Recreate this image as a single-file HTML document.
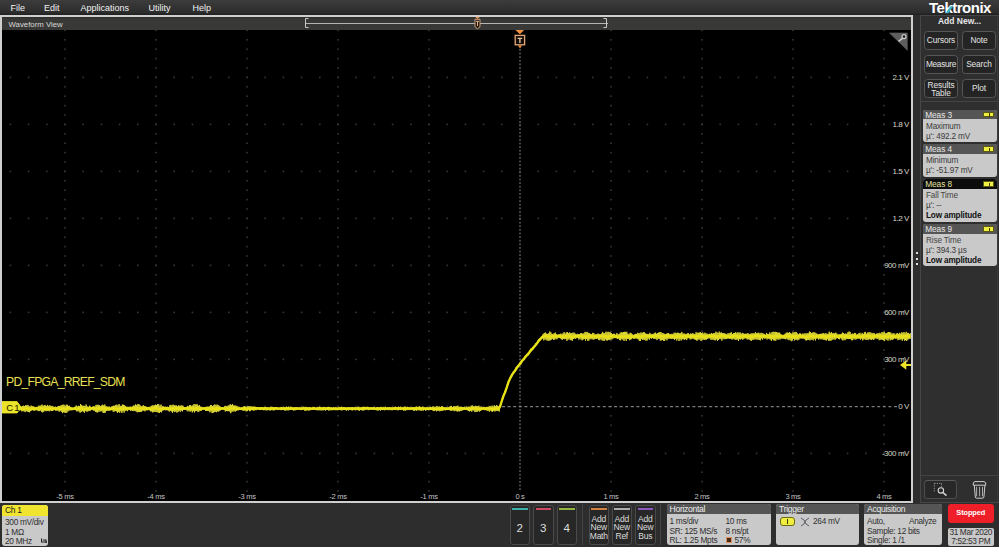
<!DOCTYPE html>
<html><head><meta charset="utf-8">
<style>
*{margin:0;padding:0;box-sizing:border-box}
html,body{width:999px;height:547px;overflow:hidden;background:#2d2d2d;font-family:"Liberation Sans",sans-serif}
.a{position:absolute;white-space:nowrap}
#menu{position:absolute;left:0;top:0;width:999px;height:15px;background:linear-gradient(#3c3c3c,#2c2c2c 85%,#1e1e1e)}
#menu .m{position:absolute;top:3px;font-size:9px;color:#f2f2f2;line-height:11px}
#logo{position:absolute;left:929px;top:-0.5px;font-size:15px;font-weight:bold;color:#fff;letter-spacing:-0.5px;line-height:16px}
#frame{position:absolute;left:0;top:15px;width:913px;height:488px;border:2px solid #cfcfcf;background:#000}
#hdr{position:absolute;left:2px;top:17px;width:909px;height:13px;background:linear-gradient(#2e2e2c,#383836 20%,#393937)}
#hdr .t{position:absolute;left:6.5px;top:2.7px;font-size:7.8px;color:#d8d8d8;line-height:9px}
#plot{position:absolute;left:2px;top:30px;width:909px;height:471px;background:#000;overflow:hidden}
.vl{position:absolute;right:2px;font-size:8px;color:#d4d4c4;line-height:10px;text-align:right;letter-spacing:-0.45px}
.tl{position:absolute;top:462px;width:40px;text-align:center;font-size:7.5px;color:#c4c4c4;line-height:9px;letter-spacing:-0.3px}
#panel{position:absolute;left:920px;top:15px;width:79px;height:488px;border:1px solid #464646;border-right:none;background:#2f2f2f}
.btn{position:absolute;width:34px;height:19px;border:1px solid #565656;border-radius:3.5px;background:#242424;color:#e4e4e4;font-size:8.3px;text-align:center;line-height:17px;letter-spacing:-0.1px}
.card{position:absolute;left:923px;width:74px;border-radius:3px;overflow:hidden;background:#c9c9c9}
.card .h{height:9.5px;background:#555;color:#e8e8e8;font-size:8.3px;line-height:10px;padding-left:2.3px;position:relative;letter-spacing:-0.1px}
.card .h .bd{position:absolute;right:2.8px;top:2.2px;width:11px;height:5.6px;background:#f0ee40;border:0.6px solid #5a5a10}.card .h .bd:after{content:"";position:absolute;left:4.3px;top:0.5px;width:1.2px;height:3.8px;background:#3a3a00}
.card .b{color:#3a3a3a;font-size:8.2px;line-height:10px;padding-left:3px;padding-top:2.5px;letter-spacing:-0.15px}
.bc{position:absolute;border-radius:3px;overflow:hidden;background:#c9c9c9;top:504px;height:41px}
.bc .h{height:10px;background:#555;color:#ececec;font-size:8.6px;line-height:10.5px;padding-left:3px;font-weight:normal;letter-spacing:-0.3px}
.bc .r{position:absolute;font-size:8.3px;color:#303030;line-height:10px;letter-spacing:-0.3px}
.chb{position:absolute;top:504.5px;width:20.5px;height:40px;border:1px solid #4a4a4a;border-radius:3px;background:#272727;color:#dcdcdc;text-align:center}
.chb .bar{position:absolute;left:1.5px;right:1.5px;top:2px;height:2.5px}
</style></head><body>

<div id="menu">
  <div class="m" style="left:10.5px">File</div>
  <div class="m" style="left:44px">Edit</div>
  <div class="m" style="left:80.5px">Applications</div>
  <div class="m" style="left:148.5px">Utility</div>
  <div class="m" style="left:192.5px">Help</div>
</div>
<div id="logo">Tektronix</div>
<svg class="a" style="left:940px;top:0" width="20" height="16"><path d="M5.6 13.3 L8.4 13.3 L13.2 6.2 L10.4 6.2 Z" fill="#3cb4c4"/></svg>

<div id="frame"></div>
<div id="hdr"><div class="t">Waveform View</div>
  <svg class="a" style="left:0;top:0" width="909" height="13">
    <line x1="303" y1="6.5" x2="606" y2="6.5" stroke="#b4b4b4" stroke-width="1"/>
    <path d="M306.5 1.5 H303.5 V10.5 H306.5" fill="none" stroke="#c8c8c8" stroke-width="1"/>
    <path d="M601.5 1.5 H604.5 V10.5 H601.5" fill="none" stroke="#c8c8c8" stroke-width="1"/>
    <path d="M472.5 -0.5 L478.5 -0.5 L475.5 2 Z" fill="#e8904a"/>
    <path d="M473 2.3 H478 V9.8 L475.5 11.8 L473 9.8 Z" fill="#2a1a10" stroke="#c8a080" stroke-width="1"/>
    <path d="M474 4.3 H477 M475.5 4.3 V9" stroke="#d8b090" stroke-width="1" fill="none"/>
  </svg>
</div>

<div id="plot">
  <svg class="a" style="left:-2px;top:-30px" width="913" height="501">
    <g fill="#363636"><rect x="64.2" y="29.6" width="1.6" height="1.6"/><rect x="64.2" y="39.0" width="1.6" height="1.6"/><rect x="64.2" y="48.4" width="1.6" height="1.6"/><rect x="64.2" y="57.8" width="1.6" height="1.6"/><rect x="64.2" y="67.2" width="1.6" height="1.6"/><rect x="64.2" y="76.6" width="1.6" height="1.6"/><rect x="64.2" y="86.0" width="1.6" height="1.6"/><rect x="64.2" y="95.4" width="1.6" height="1.6"/><rect x="64.2" y="104.8" width="1.6" height="1.6"/><rect x="64.2" y="114.2" width="1.6" height="1.6"/><rect x="64.2" y="123.6" width="1.6" height="1.6"/><rect x="64.2" y="133.0" width="1.6" height="1.6"/><rect x="64.2" y="142.4" width="1.6" height="1.6"/><rect x="64.2" y="151.8" width="1.6" height="1.6"/><rect x="64.2" y="161.2" width="1.6" height="1.6"/><rect x="64.2" y="170.6" width="1.6" height="1.6"/><rect x="64.2" y="180.0" width="1.6" height="1.6"/><rect x="64.2" y="189.4" width="1.6" height="1.6"/><rect x="64.2" y="198.8" width="1.6" height="1.6"/><rect x="64.2" y="208.2" width="1.6" height="1.6"/><rect x="64.2" y="217.6" width="1.6" height="1.6"/><rect x="64.2" y="227.0" width="1.6" height="1.6"/><rect x="64.2" y="236.4" width="1.6" height="1.6"/><rect x="64.2" y="245.8" width="1.6" height="1.6"/><rect x="64.2" y="255.2" width="1.6" height="1.6"/><rect x="64.2" y="264.6" width="1.6" height="1.6"/><rect x="64.2" y="274.0" width="1.6" height="1.6"/><rect x="64.2" y="283.4" width="1.6" height="1.6"/><rect x="64.2" y="292.8" width="1.6" height="1.6"/><rect x="64.2" y="302.2" width="1.6" height="1.6"/><rect x="64.2" y="311.6" width="1.6" height="1.6"/><rect x="64.2" y="321.0" width="1.6" height="1.6"/><rect x="64.2" y="330.4" width="1.6" height="1.6"/><rect x="64.2" y="339.8" width="1.6" height="1.6"/><rect x="64.2" y="349.2" width="1.6" height="1.6"/><rect x="64.2" y="358.6" width="1.6" height="1.6"/><rect x="64.2" y="368.0" width="1.6" height="1.6"/><rect x="64.2" y="377.4" width="1.6" height="1.6"/><rect x="64.2" y="386.8" width="1.6" height="1.6"/><rect x="64.2" y="396.2" width="1.6" height="1.6"/><rect x="64.2" y="405.6" width="1.6" height="1.6"/><rect x="64.2" y="415.0" width="1.6" height="1.6"/><rect x="64.2" y="424.4" width="1.6" height="1.6"/><rect x="64.2" y="433.8" width="1.6" height="1.6"/><rect x="64.2" y="443.2" width="1.6" height="1.6"/><rect x="64.2" y="452.6" width="1.6" height="1.6"/><rect x="64.2" y="462.0" width="1.6" height="1.6"/><rect x="64.2" y="471.4" width="1.6" height="1.6"/><rect x="64.2" y="480.8" width="1.6" height="1.6"/><rect x="64.2" y="490.2" width="1.6" height="1.6"/><rect x="155.2" y="29.6" width="1.6" height="1.6"/><rect x="155.2" y="39.0" width="1.6" height="1.6"/><rect x="155.2" y="48.4" width="1.6" height="1.6"/><rect x="155.2" y="57.8" width="1.6" height="1.6"/><rect x="155.2" y="67.2" width="1.6" height="1.6"/><rect x="155.2" y="76.6" width="1.6" height="1.6"/><rect x="155.2" y="86.0" width="1.6" height="1.6"/><rect x="155.2" y="95.4" width="1.6" height="1.6"/><rect x="155.2" y="104.8" width="1.6" height="1.6"/><rect x="155.2" y="114.2" width="1.6" height="1.6"/><rect x="155.2" y="123.6" width="1.6" height="1.6"/><rect x="155.2" y="133.0" width="1.6" height="1.6"/><rect x="155.2" y="142.4" width="1.6" height="1.6"/><rect x="155.2" y="151.8" width="1.6" height="1.6"/><rect x="155.2" y="161.2" width="1.6" height="1.6"/><rect x="155.2" y="170.6" width="1.6" height="1.6"/><rect x="155.2" y="180.0" width="1.6" height="1.6"/><rect x="155.2" y="189.4" width="1.6" height="1.6"/><rect x="155.2" y="198.8" width="1.6" height="1.6"/><rect x="155.2" y="208.2" width="1.6" height="1.6"/><rect x="155.2" y="217.6" width="1.6" height="1.6"/><rect x="155.2" y="227.0" width="1.6" height="1.6"/><rect x="155.2" y="236.4" width="1.6" height="1.6"/><rect x="155.2" y="245.8" width="1.6" height="1.6"/><rect x="155.2" y="255.2" width="1.6" height="1.6"/><rect x="155.2" y="264.6" width="1.6" height="1.6"/><rect x="155.2" y="274.0" width="1.6" height="1.6"/><rect x="155.2" y="283.4" width="1.6" height="1.6"/><rect x="155.2" y="292.8" width="1.6" height="1.6"/><rect x="155.2" y="302.2" width="1.6" height="1.6"/><rect x="155.2" y="311.6" width="1.6" height="1.6"/><rect x="155.2" y="321.0" width="1.6" height="1.6"/><rect x="155.2" y="330.4" width="1.6" height="1.6"/><rect x="155.2" y="339.8" width="1.6" height="1.6"/><rect x="155.2" y="349.2" width="1.6" height="1.6"/><rect x="155.2" y="358.6" width="1.6" height="1.6"/><rect x="155.2" y="368.0" width="1.6" height="1.6"/><rect x="155.2" y="377.4" width="1.6" height="1.6"/><rect x="155.2" y="386.8" width="1.6" height="1.6"/><rect x="155.2" y="396.2" width="1.6" height="1.6"/><rect x="155.2" y="405.6" width="1.6" height="1.6"/><rect x="155.2" y="415.0" width="1.6" height="1.6"/><rect x="155.2" y="424.4" width="1.6" height="1.6"/><rect x="155.2" y="433.8" width="1.6" height="1.6"/><rect x="155.2" y="443.2" width="1.6" height="1.6"/><rect x="155.2" y="452.6" width="1.6" height="1.6"/><rect x="155.2" y="462.0" width="1.6" height="1.6"/><rect x="155.2" y="471.4" width="1.6" height="1.6"/><rect x="155.2" y="480.8" width="1.6" height="1.6"/><rect x="155.2" y="490.2" width="1.6" height="1.6"/><rect x="246.2" y="29.6" width="1.6" height="1.6"/><rect x="246.2" y="39.0" width="1.6" height="1.6"/><rect x="246.2" y="48.4" width="1.6" height="1.6"/><rect x="246.2" y="57.8" width="1.6" height="1.6"/><rect x="246.2" y="67.2" width="1.6" height="1.6"/><rect x="246.2" y="76.6" width="1.6" height="1.6"/><rect x="246.2" y="86.0" width="1.6" height="1.6"/><rect x="246.2" y="95.4" width="1.6" height="1.6"/><rect x="246.2" y="104.8" width="1.6" height="1.6"/><rect x="246.2" y="114.2" width="1.6" height="1.6"/><rect x="246.2" y="123.6" width="1.6" height="1.6"/><rect x="246.2" y="133.0" width="1.6" height="1.6"/><rect x="246.2" y="142.4" width="1.6" height="1.6"/><rect x="246.2" y="151.8" width="1.6" height="1.6"/><rect x="246.2" y="161.2" width="1.6" height="1.6"/><rect x="246.2" y="170.6" width="1.6" height="1.6"/><rect x="246.2" y="180.0" width="1.6" height="1.6"/><rect x="246.2" y="189.4" width="1.6" height="1.6"/><rect x="246.2" y="198.8" width="1.6" height="1.6"/><rect x="246.2" y="208.2" width="1.6" height="1.6"/><rect x="246.2" y="217.6" width="1.6" height="1.6"/><rect x="246.2" y="227.0" width="1.6" height="1.6"/><rect x="246.2" y="236.4" width="1.6" height="1.6"/><rect x="246.2" y="245.8" width="1.6" height="1.6"/><rect x="246.2" y="255.2" width="1.6" height="1.6"/><rect x="246.2" y="264.6" width="1.6" height="1.6"/><rect x="246.2" y="274.0" width="1.6" height="1.6"/><rect x="246.2" y="283.4" width="1.6" height="1.6"/><rect x="246.2" y="292.8" width="1.6" height="1.6"/><rect x="246.2" y="302.2" width="1.6" height="1.6"/><rect x="246.2" y="311.6" width="1.6" height="1.6"/><rect x="246.2" y="321.0" width="1.6" height="1.6"/><rect x="246.2" y="330.4" width="1.6" height="1.6"/><rect x="246.2" y="339.8" width="1.6" height="1.6"/><rect x="246.2" y="349.2" width="1.6" height="1.6"/><rect x="246.2" y="358.6" width="1.6" height="1.6"/><rect x="246.2" y="368.0" width="1.6" height="1.6"/><rect x="246.2" y="377.4" width="1.6" height="1.6"/><rect x="246.2" y="386.8" width="1.6" height="1.6"/><rect x="246.2" y="396.2" width="1.6" height="1.6"/><rect x="246.2" y="405.6" width="1.6" height="1.6"/><rect x="246.2" y="415.0" width="1.6" height="1.6"/><rect x="246.2" y="424.4" width="1.6" height="1.6"/><rect x="246.2" y="433.8" width="1.6" height="1.6"/><rect x="246.2" y="443.2" width="1.6" height="1.6"/><rect x="246.2" y="452.6" width="1.6" height="1.6"/><rect x="246.2" y="462.0" width="1.6" height="1.6"/><rect x="246.2" y="471.4" width="1.6" height="1.6"/><rect x="246.2" y="480.8" width="1.6" height="1.6"/><rect x="246.2" y="490.2" width="1.6" height="1.6"/><rect x="337.2" y="29.6" width="1.6" height="1.6"/><rect x="337.2" y="39.0" width="1.6" height="1.6"/><rect x="337.2" y="48.4" width="1.6" height="1.6"/><rect x="337.2" y="57.8" width="1.6" height="1.6"/><rect x="337.2" y="67.2" width="1.6" height="1.6"/><rect x="337.2" y="76.6" width="1.6" height="1.6"/><rect x="337.2" y="86.0" width="1.6" height="1.6"/><rect x="337.2" y="95.4" width="1.6" height="1.6"/><rect x="337.2" y="104.8" width="1.6" height="1.6"/><rect x="337.2" y="114.2" width="1.6" height="1.6"/><rect x="337.2" y="123.6" width="1.6" height="1.6"/><rect x="337.2" y="133.0" width="1.6" height="1.6"/><rect x="337.2" y="142.4" width="1.6" height="1.6"/><rect x="337.2" y="151.8" width="1.6" height="1.6"/><rect x="337.2" y="161.2" width="1.6" height="1.6"/><rect x="337.2" y="170.6" width="1.6" height="1.6"/><rect x="337.2" y="180.0" width="1.6" height="1.6"/><rect x="337.2" y="189.4" width="1.6" height="1.6"/><rect x="337.2" y="198.8" width="1.6" height="1.6"/><rect x="337.2" y="208.2" width="1.6" height="1.6"/><rect x="337.2" y="217.6" width="1.6" height="1.6"/><rect x="337.2" y="227.0" width="1.6" height="1.6"/><rect x="337.2" y="236.4" width="1.6" height="1.6"/><rect x="337.2" y="245.8" width="1.6" height="1.6"/><rect x="337.2" y="255.2" width="1.6" height="1.6"/><rect x="337.2" y="264.6" width="1.6" height="1.6"/><rect x="337.2" y="274.0" width="1.6" height="1.6"/><rect x="337.2" y="283.4" width="1.6" height="1.6"/><rect x="337.2" y="292.8" width="1.6" height="1.6"/><rect x="337.2" y="302.2" width="1.6" height="1.6"/><rect x="337.2" y="311.6" width="1.6" height="1.6"/><rect x="337.2" y="321.0" width="1.6" height="1.6"/><rect x="337.2" y="330.4" width="1.6" height="1.6"/><rect x="337.2" y="339.8" width="1.6" height="1.6"/><rect x="337.2" y="349.2" width="1.6" height="1.6"/><rect x="337.2" y="358.6" width="1.6" height="1.6"/><rect x="337.2" y="368.0" width="1.6" height="1.6"/><rect x="337.2" y="377.4" width="1.6" height="1.6"/><rect x="337.2" y="386.8" width="1.6" height="1.6"/><rect x="337.2" y="396.2" width="1.6" height="1.6"/><rect x="337.2" y="405.6" width="1.6" height="1.6"/><rect x="337.2" y="415.0" width="1.6" height="1.6"/><rect x="337.2" y="424.4" width="1.6" height="1.6"/><rect x="337.2" y="433.8" width="1.6" height="1.6"/><rect x="337.2" y="443.2" width="1.6" height="1.6"/><rect x="337.2" y="452.6" width="1.6" height="1.6"/><rect x="337.2" y="462.0" width="1.6" height="1.6"/><rect x="337.2" y="471.4" width="1.6" height="1.6"/><rect x="337.2" y="480.8" width="1.6" height="1.6"/><rect x="337.2" y="490.2" width="1.6" height="1.6"/><rect x="428.2" y="29.6" width="1.6" height="1.6"/><rect x="428.2" y="39.0" width="1.6" height="1.6"/><rect x="428.2" y="48.4" width="1.6" height="1.6"/><rect x="428.2" y="57.8" width="1.6" height="1.6"/><rect x="428.2" y="67.2" width="1.6" height="1.6"/><rect x="428.2" y="76.6" width="1.6" height="1.6"/><rect x="428.2" y="86.0" width="1.6" height="1.6"/><rect x="428.2" y="95.4" width="1.6" height="1.6"/><rect x="428.2" y="104.8" width="1.6" height="1.6"/><rect x="428.2" y="114.2" width="1.6" height="1.6"/><rect x="428.2" y="123.6" width="1.6" height="1.6"/><rect x="428.2" y="133.0" width="1.6" height="1.6"/><rect x="428.2" y="142.4" width="1.6" height="1.6"/><rect x="428.2" y="151.8" width="1.6" height="1.6"/><rect x="428.2" y="161.2" width="1.6" height="1.6"/><rect x="428.2" y="170.6" width="1.6" height="1.6"/><rect x="428.2" y="180.0" width="1.6" height="1.6"/><rect x="428.2" y="189.4" width="1.6" height="1.6"/><rect x="428.2" y="198.8" width="1.6" height="1.6"/><rect x="428.2" y="208.2" width="1.6" height="1.6"/><rect x="428.2" y="217.6" width="1.6" height="1.6"/><rect x="428.2" y="227.0" width="1.6" height="1.6"/><rect x="428.2" y="236.4" width="1.6" height="1.6"/><rect x="428.2" y="245.8" width="1.6" height="1.6"/><rect x="428.2" y="255.2" width="1.6" height="1.6"/><rect x="428.2" y="264.6" width="1.6" height="1.6"/><rect x="428.2" y="274.0" width="1.6" height="1.6"/><rect x="428.2" y="283.4" width="1.6" height="1.6"/><rect x="428.2" y="292.8" width="1.6" height="1.6"/><rect x="428.2" y="302.2" width="1.6" height="1.6"/><rect x="428.2" y="311.6" width="1.6" height="1.6"/><rect x="428.2" y="321.0" width="1.6" height="1.6"/><rect x="428.2" y="330.4" width="1.6" height="1.6"/><rect x="428.2" y="339.8" width="1.6" height="1.6"/><rect x="428.2" y="349.2" width="1.6" height="1.6"/><rect x="428.2" y="358.6" width="1.6" height="1.6"/><rect x="428.2" y="368.0" width="1.6" height="1.6"/><rect x="428.2" y="377.4" width="1.6" height="1.6"/><rect x="428.2" y="386.8" width="1.6" height="1.6"/><rect x="428.2" y="396.2" width="1.6" height="1.6"/><rect x="428.2" y="405.6" width="1.6" height="1.6"/><rect x="428.2" y="415.0" width="1.6" height="1.6"/><rect x="428.2" y="424.4" width="1.6" height="1.6"/><rect x="428.2" y="433.8" width="1.6" height="1.6"/><rect x="428.2" y="443.2" width="1.6" height="1.6"/><rect x="428.2" y="452.6" width="1.6" height="1.6"/><rect x="428.2" y="462.0" width="1.6" height="1.6"/><rect x="428.2" y="471.4" width="1.6" height="1.6"/><rect x="428.2" y="480.8" width="1.6" height="1.6"/><rect x="428.2" y="490.2" width="1.6" height="1.6"/><rect x="610.2" y="29.6" width="1.6" height="1.6"/><rect x="610.2" y="39.0" width="1.6" height="1.6"/><rect x="610.2" y="48.4" width="1.6" height="1.6"/><rect x="610.2" y="57.8" width="1.6" height="1.6"/><rect x="610.2" y="67.2" width="1.6" height="1.6"/><rect x="610.2" y="76.6" width="1.6" height="1.6"/><rect x="610.2" y="86.0" width="1.6" height="1.6"/><rect x="610.2" y="95.4" width="1.6" height="1.6"/><rect x="610.2" y="104.8" width="1.6" height="1.6"/><rect x="610.2" y="114.2" width="1.6" height="1.6"/><rect x="610.2" y="123.6" width="1.6" height="1.6"/><rect x="610.2" y="133.0" width="1.6" height="1.6"/><rect x="610.2" y="142.4" width="1.6" height="1.6"/><rect x="610.2" y="151.8" width="1.6" height="1.6"/><rect x="610.2" y="161.2" width="1.6" height="1.6"/><rect x="610.2" y="170.6" width="1.6" height="1.6"/><rect x="610.2" y="180.0" width="1.6" height="1.6"/><rect x="610.2" y="189.4" width="1.6" height="1.6"/><rect x="610.2" y="198.8" width="1.6" height="1.6"/><rect x="610.2" y="208.2" width="1.6" height="1.6"/><rect x="610.2" y="217.6" width="1.6" height="1.6"/><rect x="610.2" y="227.0" width="1.6" height="1.6"/><rect x="610.2" y="236.4" width="1.6" height="1.6"/><rect x="610.2" y="245.8" width="1.6" height="1.6"/><rect x="610.2" y="255.2" width="1.6" height="1.6"/><rect x="610.2" y="264.6" width="1.6" height="1.6"/><rect x="610.2" y="274.0" width="1.6" height="1.6"/><rect x="610.2" y="283.4" width="1.6" height="1.6"/><rect x="610.2" y="292.8" width="1.6" height="1.6"/><rect x="610.2" y="302.2" width="1.6" height="1.6"/><rect x="610.2" y="311.6" width="1.6" height="1.6"/><rect x="610.2" y="321.0" width="1.6" height="1.6"/><rect x="610.2" y="330.4" width="1.6" height="1.6"/><rect x="610.2" y="339.8" width="1.6" height="1.6"/><rect x="610.2" y="349.2" width="1.6" height="1.6"/><rect x="610.2" y="358.6" width="1.6" height="1.6"/><rect x="610.2" y="368.0" width="1.6" height="1.6"/><rect x="610.2" y="377.4" width="1.6" height="1.6"/><rect x="610.2" y="386.8" width="1.6" height="1.6"/><rect x="610.2" y="396.2" width="1.6" height="1.6"/><rect x="610.2" y="405.6" width="1.6" height="1.6"/><rect x="610.2" y="415.0" width="1.6" height="1.6"/><rect x="610.2" y="424.4" width="1.6" height="1.6"/><rect x="610.2" y="433.8" width="1.6" height="1.6"/><rect x="610.2" y="443.2" width="1.6" height="1.6"/><rect x="610.2" y="452.6" width="1.6" height="1.6"/><rect x="610.2" y="462.0" width="1.6" height="1.6"/><rect x="610.2" y="471.4" width="1.6" height="1.6"/><rect x="610.2" y="480.8" width="1.6" height="1.6"/><rect x="610.2" y="490.2" width="1.6" height="1.6"/><rect x="701.2" y="29.6" width="1.6" height="1.6"/><rect x="701.2" y="39.0" width="1.6" height="1.6"/><rect x="701.2" y="48.4" width="1.6" height="1.6"/><rect x="701.2" y="57.8" width="1.6" height="1.6"/><rect x="701.2" y="67.2" width="1.6" height="1.6"/><rect x="701.2" y="76.6" width="1.6" height="1.6"/><rect x="701.2" y="86.0" width="1.6" height="1.6"/><rect x="701.2" y="95.4" width="1.6" height="1.6"/><rect x="701.2" y="104.8" width="1.6" height="1.6"/><rect x="701.2" y="114.2" width="1.6" height="1.6"/><rect x="701.2" y="123.6" width="1.6" height="1.6"/><rect x="701.2" y="133.0" width="1.6" height="1.6"/><rect x="701.2" y="142.4" width="1.6" height="1.6"/><rect x="701.2" y="151.8" width="1.6" height="1.6"/><rect x="701.2" y="161.2" width="1.6" height="1.6"/><rect x="701.2" y="170.6" width="1.6" height="1.6"/><rect x="701.2" y="180.0" width="1.6" height="1.6"/><rect x="701.2" y="189.4" width="1.6" height="1.6"/><rect x="701.2" y="198.8" width="1.6" height="1.6"/><rect x="701.2" y="208.2" width="1.6" height="1.6"/><rect x="701.2" y="217.6" width="1.6" height="1.6"/><rect x="701.2" y="227.0" width="1.6" height="1.6"/><rect x="701.2" y="236.4" width="1.6" height="1.6"/><rect x="701.2" y="245.8" width="1.6" height="1.6"/><rect x="701.2" y="255.2" width="1.6" height="1.6"/><rect x="701.2" y="264.6" width="1.6" height="1.6"/><rect x="701.2" y="274.0" width="1.6" height="1.6"/><rect x="701.2" y="283.4" width="1.6" height="1.6"/><rect x="701.2" y="292.8" width="1.6" height="1.6"/><rect x="701.2" y="302.2" width="1.6" height="1.6"/><rect x="701.2" y="311.6" width="1.6" height="1.6"/><rect x="701.2" y="321.0" width="1.6" height="1.6"/><rect x="701.2" y="330.4" width="1.6" height="1.6"/><rect x="701.2" y="339.8" width="1.6" height="1.6"/><rect x="701.2" y="349.2" width="1.6" height="1.6"/><rect x="701.2" y="358.6" width="1.6" height="1.6"/><rect x="701.2" y="368.0" width="1.6" height="1.6"/><rect x="701.2" y="377.4" width="1.6" height="1.6"/><rect x="701.2" y="386.8" width="1.6" height="1.6"/><rect x="701.2" y="396.2" width="1.6" height="1.6"/><rect x="701.2" y="405.6" width="1.6" height="1.6"/><rect x="701.2" y="415.0" width="1.6" height="1.6"/><rect x="701.2" y="424.4" width="1.6" height="1.6"/><rect x="701.2" y="433.8" width="1.6" height="1.6"/><rect x="701.2" y="443.2" width="1.6" height="1.6"/><rect x="701.2" y="452.6" width="1.6" height="1.6"/><rect x="701.2" y="462.0" width="1.6" height="1.6"/><rect x="701.2" y="471.4" width="1.6" height="1.6"/><rect x="701.2" y="480.8" width="1.6" height="1.6"/><rect x="701.2" y="490.2" width="1.6" height="1.6"/><rect x="792.2" y="29.6" width="1.6" height="1.6"/><rect x="792.2" y="39.0" width="1.6" height="1.6"/><rect x="792.2" y="48.4" width="1.6" height="1.6"/><rect x="792.2" y="57.8" width="1.6" height="1.6"/><rect x="792.2" y="67.2" width="1.6" height="1.6"/><rect x="792.2" y="76.6" width="1.6" height="1.6"/><rect x="792.2" y="86.0" width="1.6" height="1.6"/><rect x="792.2" y="95.4" width="1.6" height="1.6"/><rect x="792.2" y="104.8" width="1.6" height="1.6"/><rect x="792.2" y="114.2" width="1.6" height="1.6"/><rect x="792.2" y="123.6" width="1.6" height="1.6"/><rect x="792.2" y="133.0" width="1.6" height="1.6"/><rect x="792.2" y="142.4" width="1.6" height="1.6"/><rect x="792.2" y="151.8" width="1.6" height="1.6"/><rect x="792.2" y="161.2" width="1.6" height="1.6"/><rect x="792.2" y="170.6" width="1.6" height="1.6"/><rect x="792.2" y="180.0" width="1.6" height="1.6"/><rect x="792.2" y="189.4" width="1.6" height="1.6"/><rect x="792.2" y="198.8" width="1.6" height="1.6"/><rect x="792.2" y="208.2" width="1.6" height="1.6"/><rect x="792.2" y="217.6" width="1.6" height="1.6"/><rect x="792.2" y="227.0" width="1.6" height="1.6"/><rect x="792.2" y="236.4" width="1.6" height="1.6"/><rect x="792.2" y="245.8" width="1.6" height="1.6"/><rect x="792.2" y="255.2" width="1.6" height="1.6"/><rect x="792.2" y="264.6" width="1.6" height="1.6"/><rect x="792.2" y="274.0" width="1.6" height="1.6"/><rect x="792.2" y="283.4" width="1.6" height="1.6"/><rect x="792.2" y="292.8" width="1.6" height="1.6"/><rect x="792.2" y="302.2" width="1.6" height="1.6"/><rect x="792.2" y="311.6" width="1.6" height="1.6"/><rect x="792.2" y="321.0" width="1.6" height="1.6"/><rect x="792.2" y="330.4" width="1.6" height="1.6"/><rect x="792.2" y="339.8" width="1.6" height="1.6"/><rect x="792.2" y="349.2" width="1.6" height="1.6"/><rect x="792.2" y="358.6" width="1.6" height="1.6"/><rect x="792.2" y="368.0" width="1.6" height="1.6"/><rect x="792.2" y="377.4" width="1.6" height="1.6"/><rect x="792.2" y="386.8" width="1.6" height="1.6"/><rect x="792.2" y="396.2" width="1.6" height="1.6"/><rect x="792.2" y="405.6" width="1.6" height="1.6"/><rect x="792.2" y="415.0" width="1.6" height="1.6"/><rect x="792.2" y="424.4" width="1.6" height="1.6"/><rect x="792.2" y="433.8" width="1.6" height="1.6"/><rect x="792.2" y="443.2" width="1.6" height="1.6"/><rect x="792.2" y="452.6" width="1.6" height="1.6"/><rect x="792.2" y="462.0" width="1.6" height="1.6"/><rect x="792.2" y="471.4" width="1.6" height="1.6"/><rect x="792.2" y="480.8" width="1.6" height="1.6"/><rect x="792.2" y="490.2" width="1.6" height="1.6"/><rect x="883.2" y="29.6" width="1.6" height="1.6"/><rect x="883.2" y="39.0" width="1.6" height="1.6"/><rect x="883.2" y="48.4" width="1.6" height="1.6"/><rect x="883.2" y="57.8" width="1.6" height="1.6"/><rect x="883.2" y="67.2" width="1.6" height="1.6"/><rect x="883.2" y="76.6" width="1.6" height="1.6"/><rect x="883.2" y="86.0" width="1.6" height="1.6"/><rect x="883.2" y="95.4" width="1.6" height="1.6"/><rect x="883.2" y="104.8" width="1.6" height="1.6"/><rect x="883.2" y="114.2" width="1.6" height="1.6"/><rect x="883.2" y="123.6" width="1.6" height="1.6"/><rect x="883.2" y="133.0" width="1.6" height="1.6"/><rect x="883.2" y="142.4" width="1.6" height="1.6"/><rect x="883.2" y="151.8" width="1.6" height="1.6"/><rect x="883.2" y="161.2" width="1.6" height="1.6"/><rect x="883.2" y="170.6" width="1.6" height="1.6"/><rect x="883.2" y="180.0" width="1.6" height="1.6"/><rect x="883.2" y="189.4" width="1.6" height="1.6"/><rect x="883.2" y="198.8" width="1.6" height="1.6"/><rect x="883.2" y="208.2" width="1.6" height="1.6"/><rect x="883.2" y="217.6" width="1.6" height="1.6"/><rect x="883.2" y="227.0" width="1.6" height="1.6"/><rect x="883.2" y="236.4" width="1.6" height="1.6"/><rect x="883.2" y="245.8" width="1.6" height="1.6"/><rect x="883.2" y="255.2" width="1.6" height="1.6"/><rect x="883.2" y="264.6" width="1.6" height="1.6"/><rect x="883.2" y="274.0" width="1.6" height="1.6"/><rect x="883.2" y="283.4" width="1.6" height="1.6"/><rect x="883.2" y="292.8" width="1.6" height="1.6"/><rect x="883.2" y="302.2" width="1.6" height="1.6"/><rect x="883.2" y="311.6" width="1.6" height="1.6"/><rect x="883.2" y="321.0" width="1.6" height="1.6"/><rect x="883.2" y="330.4" width="1.6" height="1.6"/><rect x="883.2" y="339.8" width="1.6" height="1.6"/><rect x="883.2" y="349.2" width="1.6" height="1.6"/><rect x="883.2" y="358.6" width="1.6" height="1.6"/><rect x="883.2" y="368.0" width="1.6" height="1.6"/><rect x="883.2" y="377.4" width="1.6" height="1.6"/><rect x="883.2" y="386.8" width="1.6" height="1.6"/><rect x="883.2" y="396.2" width="1.6" height="1.6"/><rect x="883.2" y="405.6" width="1.6" height="1.6"/><rect x="883.2" y="415.0" width="1.6" height="1.6"/><rect x="883.2" y="424.4" width="1.6" height="1.6"/><rect x="883.2" y="433.8" width="1.6" height="1.6"/><rect x="883.2" y="443.2" width="1.6" height="1.6"/><rect x="883.2" y="452.6" width="1.6" height="1.6"/><rect x="883.2" y="462.0" width="1.6" height="1.6"/><rect x="883.2" y="471.4" width="1.6" height="1.6"/><rect x="883.2" y="480.8" width="1.6" height="1.6"/><rect x="883.2" y="490.2" width="1.6" height="1.6"/><rect x="9.6" y="76.6" width="1.6" height="1.6"/><rect x="27.8" y="76.6" width="1.6" height="1.6"/><rect x="46.0" y="76.6" width="1.6" height="1.6"/><rect x="64.2" y="76.6" width="1.6" height="1.6"/><rect x="82.4" y="76.6" width="1.6" height="1.6"/><rect x="100.6" y="76.6" width="1.6" height="1.6"/><rect x="118.8" y="76.6" width="1.6" height="1.6"/><rect x="137.0" y="76.6" width="1.6" height="1.6"/><rect x="155.2" y="76.6" width="1.6" height="1.6"/><rect x="173.4" y="76.6" width="1.6" height="1.6"/><rect x="191.6" y="76.6" width="1.6" height="1.6"/><rect x="209.8" y="76.6" width="1.6" height="1.6"/><rect x="228.0" y="76.6" width="1.6" height="1.6"/><rect x="246.2" y="76.6" width="1.6" height="1.6"/><rect x="264.4" y="76.6" width="1.6" height="1.6"/><rect x="282.6" y="76.6" width="1.6" height="1.6"/><rect x="300.8" y="76.6" width="1.6" height="1.6"/><rect x="319.0" y="76.6" width="1.6" height="1.6"/><rect x="337.2" y="76.6" width="1.6" height="1.6"/><rect x="355.4" y="76.6" width="1.6" height="1.6"/><rect x="373.6" y="76.6" width="1.6" height="1.6"/><rect x="391.8" y="76.6" width="1.6" height="1.6"/><rect x="410.0" y="76.6" width="1.6" height="1.6"/><rect x="428.2" y="76.6" width="1.6" height="1.6"/><rect x="446.4" y="76.6" width="1.6" height="1.6"/><rect x="464.6" y="76.6" width="1.6" height="1.6"/><rect x="482.8" y="76.6" width="1.6" height="1.6"/><rect x="501.0" y="76.6" width="1.6" height="1.6"/><rect x="519.2" y="76.6" width="1.6" height="1.6"/><rect x="537.4" y="76.6" width="1.6" height="1.6"/><rect x="555.6" y="76.6" width="1.6" height="1.6"/><rect x="573.8" y="76.6" width="1.6" height="1.6"/><rect x="592.0" y="76.6" width="1.6" height="1.6"/><rect x="610.2" y="76.6" width="1.6" height="1.6"/><rect x="628.4" y="76.6" width="1.6" height="1.6"/><rect x="646.6" y="76.6" width="1.6" height="1.6"/><rect x="664.8" y="76.6" width="1.6" height="1.6"/><rect x="683.0" y="76.6" width="1.6" height="1.6"/><rect x="701.2" y="76.6" width="1.6" height="1.6"/><rect x="719.4" y="76.6" width="1.6" height="1.6"/><rect x="737.6" y="76.6" width="1.6" height="1.6"/><rect x="755.8" y="76.6" width="1.6" height="1.6"/><rect x="774.0" y="76.6" width="1.6" height="1.6"/><rect x="792.2" y="76.6" width="1.6" height="1.6"/><rect x="810.4" y="76.6" width="1.6" height="1.6"/><rect x="828.6" y="76.6" width="1.6" height="1.6"/><rect x="846.8" y="76.6" width="1.6" height="1.6"/><rect x="865.0" y="76.6" width="1.6" height="1.6"/><rect x="883.2" y="76.6" width="1.6" height="1.6"/><rect x="901.4" y="76.6" width="1.6" height="1.6"/><rect x="9.6" y="123.6" width="1.6" height="1.6"/><rect x="27.8" y="123.6" width="1.6" height="1.6"/><rect x="46.0" y="123.6" width="1.6" height="1.6"/><rect x="64.2" y="123.6" width="1.6" height="1.6"/><rect x="82.4" y="123.6" width="1.6" height="1.6"/><rect x="100.6" y="123.6" width="1.6" height="1.6"/><rect x="118.8" y="123.6" width="1.6" height="1.6"/><rect x="137.0" y="123.6" width="1.6" height="1.6"/><rect x="155.2" y="123.6" width="1.6" height="1.6"/><rect x="173.4" y="123.6" width="1.6" height="1.6"/><rect x="191.6" y="123.6" width="1.6" height="1.6"/><rect x="209.8" y="123.6" width="1.6" height="1.6"/><rect x="228.0" y="123.6" width="1.6" height="1.6"/><rect x="246.2" y="123.6" width="1.6" height="1.6"/><rect x="264.4" y="123.6" width="1.6" height="1.6"/><rect x="282.6" y="123.6" width="1.6" height="1.6"/><rect x="300.8" y="123.6" width="1.6" height="1.6"/><rect x="319.0" y="123.6" width="1.6" height="1.6"/><rect x="337.2" y="123.6" width="1.6" height="1.6"/><rect x="355.4" y="123.6" width="1.6" height="1.6"/><rect x="373.6" y="123.6" width="1.6" height="1.6"/><rect x="391.8" y="123.6" width="1.6" height="1.6"/><rect x="410.0" y="123.6" width="1.6" height="1.6"/><rect x="428.2" y="123.6" width="1.6" height="1.6"/><rect x="446.4" y="123.6" width="1.6" height="1.6"/><rect x="464.6" y="123.6" width="1.6" height="1.6"/><rect x="482.8" y="123.6" width="1.6" height="1.6"/><rect x="501.0" y="123.6" width="1.6" height="1.6"/><rect x="519.2" y="123.6" width="1.6" height="1.6"/><rect x="537.4" y="123.6" width="1.6" height="1.6"/><rect x="555.6" y="123.6" width="1.6" height="1.6"/><rect x="573.8" y="123.6" width="1.6" height="1.6"/><rect x="592.0" y="123.6" width="1.6" height="1.6"/><rect x="610.2" y="123.6" width="1.6" height="1.6"/><rect x="628.4" y="123.6" width="1.6" height="1.6"/><rect x="646.6" y="123.6" width="1.6" height="1.6"/><rect x="664.8" y="123.6" width="1.6" height="1.6"/><rect x="683.0" y="123.6" width="1.6" height="1.6"/><rect x="701.2" y="123.6" width="1.6" height="1.6"/><rect x="719.4" y="123.6" width="1.6" height="1.6"/><rect x="737.6" y="123.6" width="1.6" height="1.6"/><rect x="755.8" y="123.6" width="1.6" height="1.6"/><rect x="774.0" y="123.6" width="1.6" height="1.6"/><rect x="792.2" y="123.6" width="1.6" height="1.6"/><rect x="810.4" y="123.6" width="1.6" height="1.6"/><rect x="828.6" y="123.6" width="1.6" height="1.6"/><rect x="846.8" y="123.6" width="1.6" height="1.6"/><rect x="865.0" y="123.6" width="1.6" height="1.6"/><rect x="883.2" y="123.6" width="1.6" height="1.6"/><rect x="901.4" y="123.6" width="1.6" height="1.6"/><rect x="9.6" y="170.6" width="1.6" height="1.6"/><rect x="27.8" y="170.6" width="1.6" height="1.6"/><rect x="46.0" y="170.6" width="1.6" height="1.6"/><rect x="64.2" y="170.6" width="1.6" height="1.6"/><rect x="82.4" y="170.6" width="1.6" height="1.6"/><rect x="100.6" y="170.6" width="1.6" height="1.6"/><rect x="118.8" y="170.6" width="1.6" height="1.6"/><rect x="137.0" y="170.6" width="1.6" height="1.6"/><rect x="155.2" y="170.6" width="1.6" height="1.6"/><rect x="173.4" y="170.6" width="1.6" height="1.6"/><rect x="191.6" y="170.6" width="1.6" height="1.6"/><rect x="209.8" y="170.6" width="1.6" height="1.6"/><rect x="228.0" y="170.6" width="1.6" height="1.6"/><rect x="246.2" y="170.6" width="1.6" height="1.6"/><rect x="264.4" y="170.6" width="1.6" height="1.6"/><rect x="282.6" y="170.6" width="1.6" height="1.6"/><rect x="300.8" y="170.6" width="1.6" height="1.6"/><rect x="319.0" y="170.6" width="1.6" height="1.6"/><rect x="337.2" y="170.6" width="1.6" height="1.6"/><rect x="355.4" y="170.6" width="1.6" height="1.6"/><rect x="373.6" y="170.6" width="1.6" height="1.6"/><rect x="391.8" y="170.6" width="1.6" height="1.6"/><rect x="410.0" y="170.6" width="1.6" height="1.6"/><rect x="428.2" y="170.6" width="1.6" height="1.6"/><rect x="446.4" y="170.6" width="1.6" height="1.6"/><rect x="464.6" y="170.6" width="1.6" height="1.6"/><rect x="482.8" y="170.6" width="1.6" height="1.6"/><rect x="501.0" y="170.6" width="1.6" height="1.6"/><rect x="519.2" y="170.6" width="1.6" height="1.6"/><rect x="537.4" y="170.6" width="1.6" height="1.6"/><rect x="555.6" y="170.6" width="1.6" height="1.6"/><rect x="573.8" y="170.6" width="1.6" height="1.6"/><rect x="592.0" y="170.6" width="1.6" height="1.6"/><rect x="610.2" y="170.6" width="1.6" height="1.6"/><rect x="628.4" y="170.6" width="1.6" height="1.6"/><rect x="646.6" y="170.6" width="1.6" height="1.6"/><rect x="664.8" y="170.6" width="1.6" height="1.6"/><rect x="683.0" y="170.6" width="1.6" height="1.6"/><rect x="701.2" y="170.6" width="1.6" height="1.6"/><rect x="719.4" y="170.6" width="1.6" height="1.6"/><rect x="737.6" y="170.6" width="1.6" height="1.6"/><rect x="755.8" y="170.6" width="1.6" height="1.6"/><rect x="774.0" y="170.6" width="1.6" height="1.6"/><rect x="792.2" y="170.6" width="1.6" height="1.6"/><rect x="810.4" y="170.6" width="1.6" height="1.6"/><rect x="828.6" y="170.6" width="1.6" height="1.6"/><rect x="846.8" y="170.6" width="1.6" height="1.6"/><rect x="865.0" y="170.6" width="1.6" height="1.6"/><rect x="883.2" y="170.6" width="1.6" height="1.6"/><rect x="901.4" y="170.6" width="1.6" height="1.6"/><rect x="9.6" y="217.6" width="1.6" height="1.6"/><rect x="27.8" y="217.6" width="1.6" height="1.6"/><rect x="46.0" y="217.6" width="1.6" height="1.6"/><rect x="64.2" y="217.6" width="1.6" height="1.6"/><rect x="82.4" y="217.6" width="1.6" height="1.6"/><rect x="100.6" y="217.6" width="1.6" height="1.6"/><rect x="118.8" y="217.6" width="1.6" height="1.6"/><rect x="137.0" y="217.6" width="1.6" height="1.6"/><rect x="155.2" y="217.6" width="1.6" height="1.6"/><rect x="173.4" y="217.6" width="1.6" height="1.6"/><rect x="191.6" y="217.6" width="1.6" height="1.6"/><rect x="209.8" y="217.6" width="1.6" height="1.6"/><rect x="228.0" y="217.6" width="1.6" height="1.6"/><rect x="246.2" y="217.6" width="1.6" height="1.6"/><rect x="264.4" y="217.6" width="1.6" height="1.6"/><rect x="282.6" y="217.6" width="1.6" height="1.6"/><rect x="300.8" y="217.6" width="1.6" height="1.6"/><rect x="319.0" y="217.6" width="1.6" height="1.6"/><rect x="337.2" y="217.6" width="1.6" height="1.6"/><rect x="355.4" y="217.6" width="1.6" height="1.6"/><rect x="373.6" y="217.6" width="1.6" height="1.6"/><rect x="391.8" y="217.6" width="1.6" height="1.6"/><rect x="410.0" y="217.6" width="1.6" height="1.6"/><rect x="428.2" y="217.6" width="1.6" height="1.6"/><rect x="446.4" y="217.6" width="1.6" height="1.6"/><rect x="464.6" y="217.6" width="1.6" height="1.6"/><rect x="482.8" y="217.6" width="1.6" height="1.6"/><rect x="501.0" y="217.6" width="1.6" height="1.6"/><rect x="519.2" y="217.6" width="1.6" height="1.6"/><rect x="537.4" y="217.6" width="1.6" height="1.6"/><rect x="555.6" y="217.6" width="1.6" height="1.6"/><rect x="573.8" y="217.6" width="1.6" height="1.6"/><rect x="592.0" y="217.6" width="1.6" height="1.6"/><rect x="610.2" y="217.6" width="1.6" height="1.6"/><rect x="628.4" y="217.6" width="1.6" height="1.6"/><rect x="646.6" y="217.6" width="1.6" height="1.6"/><rect x="664.8" y="217.6" width="1.6" height="1.6"/><rect x="683.0" y="217.6" width="1.6" height="1.6"/><rect x="701.2" y="217.6" width="1.6" height="1.6"/><rect x="719.4" y="217.6" width="1.6" height="1.6"/><rect x="737.6" y="217.6" width="1.6" height="1.6"/><rect x="755.8" y="217.6" width="1.6" height="1.6"/><rect x="774.0" y="217.6" width="1.6" height="1.6"/><rect x="792.2" y="217.6" width="1.6" height="1.6"/><rect x="810.4" y="217.6" width="1.6" height="1.6"/><rect x="828.6" y="217.6" width="1.6" height="1.6"/><rect x="846.8" y="217.6" width="1.6" height="1.6"/><rect x="865.0" y="217.6" width="1.6" height="1.6"/><rect x="883.2" y="217.6" width="1.6" height="1.6"/><rect x="901.4" y="217.6" width="1.6" height="1.6"/><rect x="9.6" y="264.6" width="1.6" height="1.6"/><rect x="27.8" y="264.6" width="1.6" height="1.6"/><rect x="46.0" y="264.6" width="1.6" height="1.6"/><rect x="64.2" y="264.6" width="1.6" height="1.6"/><rect x="82.4" y="264.6" width="1.6" height="1.6"/><rect x="100.6" y="264.6" width="1.6" height="1.6"/><rect x="118.8" y="264.6" width="1.6" height="1.6"/><rect x="137.0" y="264.6" width="1.6" height="1.6"/><rect x="155.2" y="264.6" width="1.6" height="1.6"/><rect x="173.4" y="264.6" width="1.6" height="1.6"/><rect x="191.6" y="264.6" width="1.6" height="1.6"/><rect x="209.8" y="264.6" width="1.6" height="1.6"/><rect x="228.0" y="264.6" width="1.6" height="1.6"/><rect x="246.2" y="264.6" width="1.6" height="1.6"/><rect x="264.4" y="264.6" width="1.6" height="1.6"/><rect x="282.6" y="264.6" width="1.6" height="1.6"/><rect x="300.8" y="264.6" width="1.6" height="1.6"/><rect x="319.0" y="264.6" width="1.6" height="1.6"/><rect x="337.2" y="264.6" width="1.6" height="1.6"/><rect x="355.4" y="264.6" width="1.6" height="1.6"/><rect x="373.6" y="264.6" width="1.6" height="1.6"/><rect x="391.8" y="264.6" width="1.6" height="1.6"/><rect x="410.0" y="264.6" width="1.6" height="1.6"/><rect x="428.2" y="264.6" width="1.6" height="1.6"/><rect x="446.4" y="264.6" width="1.6" height="1.6"/><rect x="464.6" y="264.6" width="1.6" height="1.6"/><rect x="482.8" y="264.6" width="1.6" height="1.6"/><rect x="501.0" y="264.6" width="1.6" height="1.6"/><rect x="519.2" y="264.6" width="1.6" height="1.6"/><rect x="537.4" y="264.6" width="1.6" height="1.6"/><rect x="555.6" y="264.6" width="1.6" height="1.6"/><rect x="573.8" y="264.6" width="1.6" height="1.6"/><rect x="592.0" y="264.6" width="1.6" height="1.6"/><rect x="610.2" y="264.6" width="1.6" height="1.6"/><rect x="628.4" y="264.6" width="1.6" height="1.6"/><rect x="646.6" y="264.6" width="1.6" height="1.6"/><rect x="664.8" y="264.6" width="1.6" height="1.6"/><rect x="683.0" y="264.6" width="1.6" height="1.6"/><rect x="701.2" y="264.6" width="1.6" height="1.6"/><rect x="719.4" y="264.6" width="1.6" height="1.6"/><rect x="737.6" y="264.6" width="1.6" height="1.6"/><rect x="755.8" y="264.6" width="1.6" height="1.6"/><rect x="774.0" y="264.6" width="1.6" height="1.6"/><rect x="792.2" y="264.6" width="1.6" height="1.6"/><rect x="810.4" y="264.6" width="1.6" height="1.6"/><rect x="828.6" y="264.6" width="1.6" height="1.6"/><rect x="846.8" y="264.6" width="1.6" height="1.6"/><rect x="865.0" y="264.6" width="1.6" height="1.6"/><rect x="883.2" y="264.6" width="1.6" height="1.6"/><rect x="901.4" y="264.6" width="1.6" height="1.6"/><rect x="9.6" y="311.6" width="1.6" height="1.6"/><rect x="27.8" y="311.6" width="1.6" height="1.6"/><rect x="46.0" y="311.6" width="1.6" height="1.6"/><rect x="64.2" y="311.6" width="1.6" height="1.6"/><rect x="82.4" y="311.6" width="1.6" height="1.6"/><rect x="100.6" y="311.6" width="1.6" height="1.6"/><rect x="118.8" y="311.6" width="1.6" height="1.6"/><rect x="137.0" y="311.6" width="1.6" height="1.6"/><rect x="155.2" y="311.6" width="1.6" height="1.6"/><rect x="173.4" y="311.6" width="1.6" height="1.6"/><rect x="191.6" y="311.6" width="1.6" height="1.6"/><rect x="209.8" y="311.6" width="1.6" height="1.6"/><rect x="228.0" y="311.6" width="1.6" height="1.6"/><rect x="246.2" y="311.6" width="1.6" height="1.6"/><rect x="264.4" y="311.6" width="1.6" height="1.6"/><rect x="282.6" y="311.6" width="1.6" height="1.6"/><rect x="300.8" y="311.6" width="1.6" height="1.6"/><rect x="319.0" y="311.6" width="1.6" height="1.6"/><rect x="337.2" y="311.6" width="1.6" height="1.6"/><rect x="355.4" y="311.6" width="1.6" height="1.6"/><rect x="373.6" y="311.6" width="1.6" height="1.6"/><rect x="391.8" y="311.6" width="1.6" height="1.6"/><rect x="410.0" y="311.6" width="1.6" height="1.6"/><rect x="428.2" y="311.6" width="1.6" height="1.6"/><rect x="446.4" y="311.6" width="1.6" height="1.6"/><rect x="464.6" y="311.6" width="1.6" height="1.6"/><rect x="482.8" y="311.6" width="1.6" height="1.6"/><rect x="501.0" y="311.6" width="1.6" height="1.6"/><rect x="519.2" y="311.6" width="1.6" height="1.6"/><rect x="537.4" y="311.6" width="1.6" height="1.6"/><rect x="555.6" y="311.6" width="1.6" height="1.6"/><rect x="573.8" y="311.6" width="1.6" height="1.6"/><rect x="592.0" y="311.6" width="1.6" height="1.6"/><rect x="610.2" y="311.6" width="1.6" height="1.6"/><rect x="628.4" y="311.6" width="1.6" height="1.6"/><rect x="646.6" y="311.6" width="1.6" height="1.6"/><rect x="664.8" y="311.6" width="1.6" height="1.6"/><rect x="683.0" y="311.6" width="1.6" height="1.6"/><rect x="701.2" y="311.6" width="1.6" height="1.6"/><rect x="719.4" y="311.6" width="1.6" height="1.6"/><rect x="737.6" y="311.6" width="1.6" height="1.6"/><rect x="755.8" y="311.6" width="1.6" height="1.6"/><rect x="774.0" y="311.6" width="1.6" height="1.6"/><rect x="792.2" y="311.6" width="1.6" height="1.6"/><rect x="810.4" y="311.6" width="1.6" height="1.6"/><rect x="828.6" y="311.6" width="1.6" height="1.6"/><rect x="846.8" y="311.6" width="1.6" height="1.6"/><rect x="865.0" y="311.6" width="1.6" height="1.6"/><rect x="883.2" y="311.6" width="1.6" height="1.6"/><rect x="901.4" y="311.6" width="1.6" height="1.6"/><rect x="9.6" y="358.6" width="1.6" height="1.6"/><rect x="27.8" y="358.6" width="1.6" height="1.6"/><rect x="46.0" y="358.6" width="1.6" height="1.6"/><rect x="64.2" y="358.6" width="1.6" height="1.6"/><rect x="82.4" y="358.6" width="1.6" height="1.6"/><rect x="100.6" y="358.6" width="1.6" height="1.6"/><rect x="118.8" y="358.6" width="1.6" height="1.6"/><rect x="137.0" y="358.6" width="1.6" height="1.6"/><rect x="155.2" y="358.6" width="1.6" height="1.6"/><rect x="173.4" y="358.6" width="1.6" height="1.6"/><rect x="191.6" y="358.6" width="1.6" height="1.6"/><rect x="209.8" y="358.6" width="1.6" height="1.6"/><rect x="228.0" y="358.6" width="1.6" height="1.6"/><rect x="246.2" y="358.6" width="1.6" height="1.6"/><rect x="264.4" y="358.6" width="1.6" height="1.6"/><rect x="282.6" y="358.6" width="1.6" height="1.6"/><rect x="300.8" y="358.6" width="1.6" height="1.6"/><rect x="319.0" y="358.6" width="1.6" height="1.6"/><rect x="337.2" y="358.6" width="1.6" height="1.6"/><rect x="355.4" y="358.6" width="1.6" height="1.6"/><rect x="373.6" y="358.6" width="1.6" height="1.6"/><rect x="391.8" y="358.6" width="1.6" height="1.6"/><rect x="410.0" y="358.6" width="1.6" height="1.6"/><rect x="428.2" y="358.6" width="1.6" height="1.6"/><rect x="446.4" y="358.6" width="1.6" height="1.6"/><rect x="464.6" y="358.6" width="1.6" height="1.6"/><rect x="482.8" y="358.6" width="1.6" height="1.6"/><rect x="501.0" y="358.6" width="1.6" height="1.6"/><rect x="519.2" y="358.6" width="1.6" height="1.6"/><rect x="537.4" y="358.6" width="1.6" height="1.6"/><rect x="555.6" y="358.6" width="1.6" height="1.6"/><rect x="573.8" y="358.6" width="1.6" height="1.6"/><rect x="592.0" y="358.6" width="1.6" height="1.6"/><rect x="610.2" y="358.6" width="1.6" height="1.6"/><rect x="628.4" y="358.6" width="1.6" height="1.6"/><rect x="646.6" y="358.6" width="1.6" height="1.6"/><rect x="664.8" y="358.6" width="1.6" height="1.6"/><rect x="683.0" y="358.6" width="1.6" height="1.6"/><rect x="701.2" y="358.6" width="1.6" height="1.6"/><rect x="719.4" y="358.6" width="1.6" height="1.6"/><rect x="737.6" y="358.6" width="1.6" height="1.6"/><rect x="755.8" y="358.6" width="1.6" height="1.6"/><rect x="774.0" y="358.6" width="1.6" height="1.6"/><rect x="792.2" y="358.6" width="1.6" height="1.6"/><rect x="810.4" y="358.6" width="1.6" height="1.6"/><rect x="828.6" y="358.6" width="1.6" height="1.6"/><rect x="846.8" y="358.6" width="1.6" height="1.6"/><rect x="865.0" y="358.6" width="1.6" height="1.6"/><rect x="883.2" y="358.6" width="1.6" height="1.6"/><rect x="901.4" y="358.6" width="1.6" height="1.6"/><rect x="9.6" y="405.6" width="1.6" height="1.6"/><rect x="27.8" y="405.6" width="1.6" height="1.6"/><rect x="46.0" y="405.6" width="1.6" height="1.6"/><rect x="64.2" y="405.6" width="1.6" height="1.6"/><rect x="82.4" y="405.6" width="1.6" height="1.6"/><rect x="100.6" y="405.6" width="1.6" height="1.6"/><rect x="118.8" y="405.6" width="1.6" height="1.6"/><rect x="137.0" y="405.6" width="1.6" height="1.6"/><rect x="155.2" y="405.6" width="1.6" height="1.6"/><rect x="173.4" y="405.6" width="1.6" height="1.6"/><rect x="191.6" y="405.6" width="1.6" height="1.6"/><rect x="209.8" y="405.6" width="1.6" height="1.6"/><rect x="228.0" y="405.6" width="1.6" height="1.6"/><rect x="246.2" y="405.6" width="1.6" height="1.6"/><rect x="264.4" y="405.6" width="1.6" height="1.6"/><rect x="282.6" y="405.6" width="1.6" height="1.6"/><rect x="300.8" y="405.6" width="1.6" height="1.6"/><rect x="319.0" y="405.6" width="1.6" height="1.6"/><rect x="337.2" y="405.6" width="1.6" height="1.6"/><rect x="355.4" y="405.6" width="1.6" height="1.6"/><rect x="373.6" y="405.6" width="1.6" height="1.6"/><rect x="391.8" y="405.6" width="1.6" height="1.6"/><rect x="410.0" y="405.6" width="1.6" height="1.6"/><rect x="428.2" y="405.6" width="1.6" height="1.6"/><rect x="446.4" y="405.6" width="1.6" height="1.6"/><rect x="464.6" y="405.6" width="1.6" height="1.6"/><rect x="482.8" y="405.6" width="1.6" height="1.6"/><rect x="9.6" y="452.6" width="1.6" height="1.6"/><rect x="27.8" y="452.6" width="1.6" height="1.6"/><rect x="46.0" y="452.6" width="1.6" height="1.6"/><rect x="64.2" y="452.6" width="1.6" height="1.6"/><rect x="82.4" y="452.6" width="1.6" height="1.6"/><rect x="100.6" y="452.6" width="1.6" height="1.6"/><rect x="118.8" y="452.6" width="1.6" height="1.6"/><rect x="137.0" y="452.6" width="1.6" height="1.6"/><rect x="155.2" y="452.6" width="1.6" height="1.6"/><rect x="173.4" y="452.6" width="1.6" height="1.6"/><rect x="191.6" y="452.6" width="1.6" height="1.6"/><rect x="209.8" y="452.6" width="1.6" height="1.6"/><rect x="228.0" y="452.6" width="1.6" height="1.6"/><rect x="246.2" y="452.6" width="1.6" height="1.6"/><rect x="264.4" y="452.6" width="1.6" height="1.6"/><rect x="282.6" y="452.6" width="1.6" height="1.6"/><rect x="300.8" y="452.6" width="1.6" height="1.6"/><rect x="319.0" y="452.6" width="1.6" height="1.6"/><rect x="337.2" y="452.6" width="1.6" height="1.6"/><rect x="355.4" y="452.6" width="1.6" height="1.6"/><rect x="373.6" y="452.6" width="1.6" height="1.6"/><rect x="391.8" y="452.6" width="1.6" height="1.6"/><rect x="410.0" y="452.6" width="1.6" height="1.6"/><rect x="428.2" y="452.6" width="1.6" height="1.6"/><rect x="446.4" y="452.6" width="1.6" height="1.6"/><rect x="464.6" y="452.6" width="1.6" height="1.6"/><rect x="482.8" y="452.6" width="1.6" height="1.6"/><rect x="501.0" y="452.6" width="1.6" height="1.6"/><rect x="519.2" y="452.6" width="1.6" height="1.6"/><rect x="537.4" y="452.6" width="1.6" height="1.6"/><rect x="555.6" y="452.6" width="1.6" height="1.6"/><rect x="573.8" y="452.6" width="1.6" height="1.6"/><rect x="592.0" y="452.6" width="1.6" height="1.6"/><rect x="610.2" y="452.6" width="1.6" height="1.6"/><rect x="628.4" y="452.6" width="1.6" height="1.6"/><rect x="646.6" y="452.6" width="1.6" height="1.6"/><rect x="664.8" y="452.6" width="1.6" height="1.6"/><rect x="683.0" y="452.6" width="1.6" height="1.6"/><rect x="701.2" y="452.6" width="1.6" height="1.6"/><rect x="719.4" y="452.6" width="1.6" height="1.6"/><rect x="737.6" y="452.6" width="1.6" height="1.6"/><rect x="755.8" y="452.6" width="1.6" height="1.6"/><rect x="774.0" y="452.6" width="1.6" height="1.6"/><rect x="792.2" y="452.6" width="1.6" height="1.6"/><rect x="810.4" y="452.6" width="1.6" height="1.6"/><rect x="828.6" y="452.6" width="1.6" height="1.6"/><rect x="846.8" y="452.6" width="1.6" height="1.6"/><rect x="865.0" y="452.6" width="1.6" height="1.6"/><rect x="883.2" y="452.6" width="1.6" height="1.6"/><rect x="901.4" y="452.6" width="1.6" height="1.6"/></g>
    <!-- trigger vertical dashed -->
    <line x1="520" y1="49" x2="520" y2="492" stroke="#8c8c8c" stroke-width="1" stroke-dasharray="1.8,1.8"/>
    <!-- 0V dashed -->
    <line x1="502" y1="406.7" x2="898" y2="406.7" stroke="#999" stroke-width="1" stroke-dasharray="3,2.6"/>
    <!-- waveform -->
    <path d="M2.0,410.4 L2.5,406.9 L3.1,411.1 L3.6,406.9 L4.2,411.1 L4.7,406.3 L5.3,410.4 L5.8,406.0 L6.4,410.4 L6.9,406.0 L7.5,410.5 L8.0,406.6 L8.6,411.2 L9.2,405.3 L9.7,410.6 L10.3,406.5 L10.8,411.4 L11.4,405.3 L11.9,411.2 L12.5,406.4 L13.0,411.6 L13.6,407.1 L14.1,411.1 L14.7,407.0 L15.2,409.9 L15.8,407.4 L16.3,409.9 L16.9,407.0 L17.4,409.6 L18.0,407.0 L18.5,410.4 L19.1,406.9 L19.6,410.6 L20.2,407.1 L20.7,410.2 L21.3,406.7 L21.8,411.4 L22.4,406.1 L22.9,411.0 L23.5,405.7 L24.0,411.4 L24.6,406.1 L25.1,412.1 L25.7,405.2 L26.2,411.1 L26.8,405.4 L27.3,411.6 L27.9,404.9 L28.4,412.0 L29.0,406.1 L29.5,412.3 L30.1,406.5 L30.6,411.1 L31.2,405.6 L31.7,410.5 L32.3,406.3 L32.8,410.1 L33.4,406.4 L33.9,410.8 L34.5,406.8 L35.0,410.5 L35.6,407.5 L36.1,410.1 L36.7,406.9 L37.2,410.4 L37.8,406.7 L38.3,411.2 L38.8,405.7 L39.4,411.0 L39.9,405.8 L40.5,410.5 L41.0,405.4 L41.6,411.8 L42.1,404.6 L42.7,412.4 L43.2,405.9 L43.8,411.6 L44.3,405.0 L44.9,410.8 L45.4,405.4 L46.0,411.2 L46.5,406.2 L47.1,410.9 L47.6,404.9 L48.2,410.9 L48.7,406.1 L49.3,411.3 L49.8,405.2 L50.4,410.5 L50.9,406.2 L51.5,411.0 L52.0,405.9 L52.6,411.0 L53.1,406.4 L53.7,409.9 L54.2,407.4 L54.8,409.9 L55.3,406.6 L55.9,411.0 L56.4,407.0 L57.0,410.4 L57.5,406.6 L58.1,410.7 L58.6,405.9 L59.2,411.7 L59.7,406.0 L60.3,410.7 L60.8,405.5 L61.4,411.7 L61.9,405.0 L62.5,413.1 L63.0,404.6 L63.6,412.2 L64.1,404.8 L64.7,412.5 L65.2,406.2 L65.8,412.9 L66.3,404.7 L66.9,412.6 L67.4,404.8 L68.0,411.4 L68.5,405.9 L69.1,410.6 L69.6,405.8 L70.2,410.3 L70.7,407.0 L71.3,410.2 L71.8,407.2 L72.4,410.0 L72.9,407.7 L73.5,409.5 L74.0,407.3 L74.6,410.0 L75.1,406.7 L75.7,410.2 L76.2,405.5 L76.8,411.4 L77.3,406.5 L77.9,411.1 L78.4,405.8 L79.0,411.5 L79.5,406.1 L80.1,412.7 L80.6,404.0 L81.2,412.0 L81.7,405.1 L82.3,411.2 L82.8,406.0 L83.4,411.7 L83.9,405.7 L84.5,412.7 L85.0,406.0 L85.6,410.8 L86.1,404.5 L86.7,411.7 L87.2,406.4 L87.8,411.4 L88.3,406.9 L88.9,411.0 L89.4,405.7 L90.0,411.1 L90.5,406.6 L91.1,409.9 L91.6,407.4 L92.2,409.7 L92.7,406.6 L93.3,410.5 L93.8,406.1 L94.4,410.6 L94.9,406.6 L95.5,411.8 L96.0,404.9 L96.6,412.2 L97.1,404.9 L97.7,412.5 L98.2,404.8 L98.8,411.4 L99.3,405.1 L99.9,411.7 L100.4,406.2 L101.0,411.0 L101.5,405.6 L102.1,411.5 L102.6,404.7 L103.2,413.0 L103.7,405.4 L104.3,412.8 L104.8,404.5 L105.4,412.5 L105.9,406.0 L106.5,410.8 L107.0,406.5 L107.6,410.5 L108.1,406.9 L108.7,410.7 L109.2,406.4 L109.8,410.5 L110.3,407.4 L110.9,410.2 L111.4,406.6 L112.0,410.0 L112.5,406.3 L113.1,411.5 L113.6,405.7 L114.2,411.7 L114.7,405.8 L115.3,410.9 L115.8,404.9 L116.4,411.4 L116.9,404.7 L117.5,413.0 L118.0,405.4 L118.6,411.9 L119.1,404.0 L119.7,412.7 L120.2,405.9 L120.8,411.2 L121.3,405.9 L121.9,412.9 L122.4,404.6 L123.0,411.1 L123.5,404.8 L124.1,412.6 L124.6,405.4 L125.2,411.0 L125.7,406.0 L126.3,410.4 L126.8,407.1 L127.4,411.2 L127.9,406.7 L128.5,410.1 L129.0,407.0 L129.6,410.0 L130.1,406.5 L130.7,410.9 L131.2,406.9 L131.8,410.5 L132.3,406.5 L132.9,410.8 L133.4,405.6 L134.0,411.1 L134.5,405.7 L135.1,411.0 L135.6,404.4 L136.2,411.6 L136.7,405.3 L137.3,412.3 L137.8,404.1 L138.4,411.9 L138.9,404.1 L139.5,412.1 L140.0,405.1 L140.6,412.0 L141.1,406.3 L141.7,411.7 L142.2,406.1 L142.8,410.6 L143.3,405.2 L143.9,410.7 L144.4,406.1 L145.0,411.3 L145.5,406.4 L146.1,410.3 L146.6,406.8 L147.2,410.2 L147.7,407.1 L148.3,409.7 L148.8,406.9 L149.4,410.2 L149.9,406.8 L150.5,411.3 L151.1,406.1 L151.6,411.4 L152.2,405.3 L152.7,412.4 L153.3,405.6 L153.8,412.0 L154.4,405.3 L154.9,412.0 L155.5,404.7 L156.0,412.0 L156.6,405.0 L157.1,412.1 L157.7,404.0 L158.2,412.6 L158.8,404.3 L159.3,413.0 L159.9,405.8 L160.4,411.9 L161.0,404.6 L161.5,412.3 L162.1,406.4 L162.6,410.6 L163.2,406.2 L163.7,410.3 L164.3,406.8 L164.8,410.0 L165.4,406.7 L165.9,410.4 L166.5,407.0 L167.0,409.7 L167.6,406.7 L168.1,410.7 L168.7,407.0 L169.2,411.5 L169.8,405.3 L170.3,410.8 L170.9,404.9 L171.4,411.4 L172.0,405.5 L172.5,412.8 L173.1,404.6 L173.6,411.2 L174.2,405.3 L174.7,412.1 L175.3,405.5 L175.8,411.4 L176.4,405.5 L176.9,412.6 L177.5,406.3 L178.0,412.1 L178.6,405.4 L179.1,410.8 L179.7,405.8 L180.2,411.8 L180.8,405.7 L181.3,410.5 L181.9,405.3 L182.4,411.4 L183.0,405.8 L183.5,410.0 L184.1,407.1 L184.6,409.6 L185.2,407.2 L185.7,409.8 L186.3,407.3 L186.8,410.4 L187.4,405.9 L187.9,411.4 L188.5,406.5 L189.0,410.6 L189.6,405.0 L190.1,411.7 L190.7,405.1 L191.2,410.9 L191.8,406.3 L192.3,412.4 L192.9,405.3 L193.4,411.1 L194.0,404.1 L194.5,412.4 L195.1,404.4 L195.6,411.1 L196.2,404.3 L196.7,411.0 L197.3,404.5 L197.8,411.7 L198.4,405.8 L198.9,411.7 L199.5,405.0 L200.0,410.9 L200.6,406.7 L201.1,411.0 L201.7,406.8 L202.2,410.0 L202.8,407.3 L203.3,409.6 L203.9,407.6 L204.4,409.9 L205.0,407.1 L205.5,410.9 L206.1,406.8 L206.6,410.9 L207.2,406.6 L207.7,411.0 L208.3,406.7 L208.8,411.1 L209.4,406.5 L209.9,412.3 L210.5,405.2 L211.0,411.3 L211.6,405.2 L212.1,413.1 L212.7,406.0 L213.2,412.9 L213.8,405.2 L214.3,412.1 L214.9,404.4 L215.4,411.7 L216.0,405.3 L216.5,412.2 L217.1,404.5 L217.6,411.3 L218.2,405.1 L218.7,411.6 L219.3,405.9 L219.8,410.8 L220.4,406.7 L220.9,410.0 L221.5,407.3 L222.0,409.6 L222.6,407.2 L223.1,409.8 L223.7,407.3 L224.2,410.0 L224.8,406.0 L225.3,411.5 L225.9,405.8 L226.4,410.9 L227.0,406.3 L227.5,411.2 L228.1,405.6 L228.6,411.1 L229.2,405.4 L229.7,411.5 L230.3,404.1 L230.8,413.2 L231.4,405.0 L231.9,411.5 L232.5,404.0 L233.0,411.6 L233.6,405.5 L234.1,410.9 L234.7,405.6 L235.2,411.7 L235.8,405.6 L236.3,410.9 L236.9,405.9 L237.4,410.3 L238.0,406.6 L238.5,410.2 L239.1,406.8 L239.6,409.8 L240.2,407.5 L240.7,409.8 L241.3,407.6 L241.8,410.1 L242.4,407.0 L242.9,410.6 L243.5,406.6 L244.0,410.8 L244.6,406.1 L245.1,410.5 L245.7,406.7 L246.2,411.4 L246.8,406.9 L247.3,411.1 L247.9,406.2 L248.4,410.1 L249.0,406.0 L249.5,411.2 L250.1,406.4 L250.6,410.9 L251.2,406.3 L251.7,410.0 L252.3,406.8 L252.8,410.3 L253.4,406.6 L253.9,410.5 L254.5,406.7 L255.0,410.1 L255.6,406.8 L256.1,410.2 L256.7,407.0 L257.2,409.7 L257.8,407.7 L258.3,409.6 L258.9,407.4 L259.4,409.5 L260.0,407.1 L260.5,409.9 L261.1,407.2 L261.6,410.0 L262.2,407.1 L262.7,410.0 L263.3,407.7 L263.8,410.3 L264.4,406.9 L264.9,410.1 L265.5,407.1 L266.0,410.3 L266.6,407.5 L267.1,410.4 L267.7,407.3 L268.2,409.7 L268.8,407.3 L269.3,410.4 L269.9,407.4 L270.4,410.4 L271.0,406.6 L271.5,410.1 L272.1,407.2 L272.6,410.1 L273.2,406.9 L273.7,410.3 L274.3,407.0 L274.8,410.2 L275.4,407.6 L275.9,409.6 L276.5,407.5 L277.0,410.1 L277.6,407.5 L278.1,409.9 L278.7,407.8 L279.2,409.5 L279.8,407.5 L280.3,410.1 L280.9,407.1 L281.4,410.1 L282.0,407.4 L282.5,410.0 L283.1,407.2 L283.6,410.0 L284.2,407.5 L284.7,410.5 L285.3,407.4 L285.8,410.6 L286.4,406.6 L286.9,409.6 L287.5,407.1 L288.0,410.5 L288.6,406.6 L289.1,410.1 L289.7,407.3 L290.2,409.8 L290.8,406.6 L291.3,409.8 L291.9,407.0 L292.4,409.7 L293.0,407.1 L293.5,410.4 L294.1,407.5 L294.6,410.3 L295.2,407.3 L295.7,410.2 L296.3,407.2 L296.8,409.6 L297.4,407.1 L297.9,409.8 L298.5,407.7 L299.0,409.5 L299.6,407.3 L300.1,409.9 L300.7,407.4 L301.2,409.7 L301.8,407.3 L302.3,409.9 L302.9,406.8 L303.4,409.6 L304.0,406.8 L304.5,410.5 L305.1,407.5 L305.6,410.6 L306.2,406.8 L306.7,410.6 L307.3,407.3 L307.8,410.0 L308.4,407.2 L308.9,410.6 L309.5,407.0 L310.0,410.0 L310.6,407.2 L311.1,409.8 L311.7,407.6 L312.2,409.6 L312.8,406.9 L313.3,409.8 L313.9,406.9 L314.4,409.7 L315.0,407.5 L315.5,409.8 L316.1,407.6 L316.6,409.7 L317.2,406.9 L317.7,410.3 L318.3,407.0 L318.8,410.1 L319.4,406.8 L319.9,410.4 L320.5,407.1 L321.0,410.3 L321.6,407.6 L322.1,410.3 L322.7,407.1 L323.2,410.4 L323.8,406.9 L324.3,409.9 L324.9,407.5 L325.4,410.6 L326.0,407.4 L326.5,410.1 L327.1,407.2 L327.6,409.9 L328.2,406.8 L328.7,410.6 L329.3,407.4 L329.8,410.2 L330.4,407.4 L330.9,410.1 L331.5,407.3 L332.0,409.7 L332.6,407.6 L333.1,409.6 L333.7,407.0 L334.2,409.8 L334.8,407.6 L335.3,410.2 L335.9,406.9 L336.4,409.9 L337.0,407.6 L337.5,409.7 L338.1,407.6 L338.6,409.9 L339.2,407.5 L339.7,409.8 L340.3,407.4 L340.8,410.2 L341.4,406.7 L341.9,410.4 L342.5,407.2 L343.0,410.1 L343.6,407.0 L344.1,410.0 L344.7,407.2 L345.2,409.7 L345.8,407.3 L346.3,410.6 L346.9,407.5 L347.4,410.1 L348.0,407.0 L348.5,410.4 L349.1,407.4 L349.6,409.8 L350.2,407.4 L350.7,409.9 L351.3,407.3 L351.8,410.3 L352.4,407.0 L352.9,410.1 L353.5,407.8 L354.0,409.5 L354.6,407.1 L355.1,410.3 L355.7,407.3 L356.2,410.1 L356.8,407.7 L357.3,409.9 L357.9,406.7 L358.4,410.4 L359.0,406.8 L359.5,410.6 L360.1,407.3 L360.6,409.7 L361.2,407.4 L361.7,410.2 L362.3,406.9 L362.8,410.6 L363.4,406.8 L363.9,410.3 L364.5,406.8 L365.0,410.1 L365.6,407.0 L366.1,409.6 L366.7,406.8 L367.2,409.8 L367.8,406.8 L368.3,410.2 L368.9,407.4 L369.4,409.6 L370.0,407.5 L370.5,410.0 L371.1,407.2 L371.6,409.5 L372.2,407.7 L372.7,409.9 L373.3,407.2 L373.8,409.8 L374.4,407.5 L374.9,410.1 L375.5,407.7 L376.0,409.8 L376.6,407.2 L377.1,410.5 L377.7,407.0 L378.2,410.5 L378.8,407.1 L379.3,409.9 L379.9,407.3 L380.4,410.6 L381.0,406.8 L381.5,409.9 L382.1,407.5 L382.6,410.1 L383.2,406.9 L383.7,410.0 L384.3,407.3 L384.8,410.3 L385.4,406.7 L385.9,409.8 L386.5,407.6 L387.0,409.9 L387.6,407.3 L388.1,410.1 L388.7,407.5 L389.2,410.2 L389.8,407.1 L390.3,409.8 L390.9,407.6 L391.4,410.2 L392.0,407.5 L392.5,410.2 L393.1,407.5 L393.6,409.7 L394.2,407.0 L394.7,409.8 L395.3,406.7 L395.8,410.1 L396.4,407.4 L396.9,409.8 L397.5,407.2 L398.0,410.3 L398.6,406.6 L399.1,409.8 L399.7,407.2 L400.2,409.9 L400.8,406.6 L401.3,409.8 L401.9,407.5 L402.4,409.7 L403.0,407.2 L403.5,410.5 L404.1,406.7 L404.6,410.3 L405.2,406.6 L405.7,410.5 L406.3,407.3 L406.8,409.7 L407.4,406.8 L407.9,410.1 L408.5,407.7 L409.0,410.0 L409.6,407.5 L410.1,409.8 L410.7,407.4 L411.2,409.7 L411.8,407.6 L412.3,409.9 L412.9,407.2 L413.4,410.6 L414.0,407.4 L414.5,410.8 L415.1,407.2 L415.6,410.2 L416.2,406.5 L416.7,410.8 L417.3,406.9 L417.8,409.9 L418.4,406.8 L418.9,410.3 L419.5,406.2 L420.0,410.1 L420.6,406.9 L421.1,410.9 L421.7,407.4 L422.2,410.3 L422.8,406.5 L423.3,410.6 L423.9,407.4 L424.4,409.7 L425.0,407.5 L425.5,410.6 L426.1,407.4 L426.6,410.2 L427.2,406.9 L427.7,409.7 L428.3,407.5 L428.8,410.3 L429.4,407.1 L429.9,409.8 L430.5,406.8 L431.0,410.0 L431.6,407.2 L432.1,409.8 L432.7,406.5 L433.2,411.0 L433.8,406.5 L434.3,411.1 L434.9,407.2 L435.4,410.3 L436.0,406.6 L436.5,411.3 L437.1,405.9 L437.6,410.6 L438.2,406.8 L438.7,410.6 L439.3,406.5 L439.8,411.3 L440.4,407.0 L440.9,411.0 L441.5,406.3 L442.0,410.9 L442.6,406.4 L443.1,410.5 L443.7,407.1 L444.2,410.1 L444.8,407.2 L445.3,410.4 L445.9,407.6 L446.4,409.6 L447.0,407.1 L447.5,409.7 L448.1,407.5 L448.6,409.7 L449.2,406.9 L449.7,410.2 L450.3,406.1 L450.8,411.0 L451.4,405.9 L451.9,410.4 L452.5,407.0 L453.0,410.2 L453.6,406.3 L454.1,411.2 L454.7,406.3 L455.2,410.6 L455.8,406.3 L456.3,411.2 L456.9,405.9 L457.4,411.4 L458.0,405.7 L458.5,411.2 L459.1,406.9 L459.6,411.4 L460.2,406.7 L460.7,410.8 L461.3,406.7 L461.8,410.9 L462.4,407.1 L462.9,410.1 L463.5,407.2 L464.0,409.8 L464.6,406.8 L465.1,410.0 L465.7,407.5 L466.2,409.9 L466.8,406.5 L467.3,410.3 L467.9,407.1 L468.4,410.9 L469.0,406.4 L469.5,411.4 L470.1,407.0 L470.6,410.9 L471.2,405.7 L471.7,411.6 L472.3,405.4 L472.8,410.4 L473.4,406.3 L473.9,410.6 L474.5,406.5 L475.0,412.1 L475.6,405.8 L476.1,412.0 L476.7,406.2 L477.2,411.8 L477.8,406.1 L478.3,410.7 L478.9,405.7 L479.4,411.6 L480.0,406.9 L480.5,410.9 L481.1,406.4 L481.6,410.1 L482.2,407.0 L482.7,409.8 L483.3,407.4 L483.8,409.7 L484.4,407.2 L484.9,410.2 L485.5,407.3 L486.0,409.8 L486.6,406.9 L487.1,410.9 L487.7,406.9 L488.2,410.6 L488.8,406.6 L489.3,411.6 L489.9,405.9 L490.4,410.5 L491.0,406.5 L491.5,411.3 L492.1,405.6 L492.6,411.8 L493.2,406.5 L493.7,410.9 L494.3,405.3 L494.8,411.4 L495.4,406.1 L495.9,411.1 L496.5,405.0 L497.0,411.0 L497.6,405.8 L498.1,410.9 L498.7,406.3 L499.2,411.5 L499.8,404.9 L500.3,407.0 L500.6,404.0 L500.9,405.2 L501.2,402.0 L501.5,402.7 L501.8,399.5 L502.1,401.0 L502.4,397.6 L502.7,399.1 L503.0,395.8 L503.3,397.6 L503.6,394.8 L503.9,395.7 L504.2,393.0 L504.5,394.6 L504.8,391.1 L505.1,392.6 L505.4,389.8 L505.7,391.3 L506.0,388.3 L506.3,389.5 L506.6,386.8 L506.9,388.0 L507.2,384.6 L507.5,386.0 L507.8,383.2 L508.1,384.8 L508.4,381.1 L508.7,382.6 L509.0,380.0 L509.3,381.7 L509.6,378.1 L509.9,380.1 L510.2,377.6 L510.5,379.2 L510.8,376.2 L511.1,378.0 L511.4,374.8 L511.7,376.8 L512.0,373.9 L512.3,375.6 L512.6,373.0 L512.9,374.5 L513.2,371.6 L513.5,373.9 L513.8,371.2 L514.1,372.6 L514.4,370.2 L514.7,371.9 L515.0,369.3 L515.3,370.7 L515.6,368.5 L515.9,370.3 L516.2,367.2 L516.5,368.9 L516.8,366.6 L517.1,368.7 L517.4,366.2 L517.7,368.0 L518.0,365.4 L518.3,367.0 L518.6,364.3 L518.9,366.3 L519.2,363.7 L519.5,365.4 L519.8,362.7 L520.1,364.6 L520.4,361.9 L520.7,363.9 L521.0,361.3 L521.3,362.8 L521.6,360.4 L521.9,362.4 L522.2,359.9 L522.5,361.8 L522.8,358.8 L523.1,360.8 L523.4,358.5 L523.7,360.1 L524.0,357.8 L524.3,359.1 L524.6,356.9 L524.9,358.4 L525.2,356.1 L525.5,358.0 L525.8,355.7 L526.1,357.4 L526.4,355.0 L526.7,356.7 L527.0,353.7 L527.3,355.8 L527.6,353.6 L527.9,355.1 L528.2,352.6 L528.5,354.7 L528.8,352.1 L529.1,354.0 L529.4,350.7 L529.7,353.1 L530.0,350.1 L530.3,352.0 L530.6,349.3 L530.9,351.5 L531.2,348.6 L531.5,351.1 L531.8,348.5 L532.1,350.3 L532.4,347.2 L532.7,349.1 L533.0,346.9 L533.3,348.8 L533.6,346.3 L533.9,348.2 L534.2,345.5 L534.5,347.4 L534.8,344.9 L535.1,346.5 L535.4,343.6 L535.7,345.5 L536.0,343.3 L536.3,345.0 L536.6,342.6 L536.9,344.0 L537.2,341.9 L537.5,343.3 L537.8,340.6 L538.1,343.0 L538.4,339.9 L538.7,341.9 L539.0,339.3 L539.3,341.1 L539.6,338.8 L539.9,340.8 L540.2,338.3 L540.5,340.4 L540.8,337.5 L541.1,339.5 L541.4,336.6 L541.7,338.6 L542.0,335.9 L542.3,338.3 L542.6,335.8 L542.9,337.9 L543.2,333.9 L543.8,340.4 L544.3,333.1 L544.9,339.3 L545.4,332.5 L546.0,339.7 L546.5,333.7 L547.1,340.5 L547.6,333.9 L548.2,340.8 L548.7,333.3 L549.3,340.4 L549.8,331.5 L550.4,340.3 L550.9,332.4 L551.5,339.5 L552.0,334.0 L552.6,338.8 L553.1,333.8 L553.7,340.0 L554.2,333.3 L554.8,339.5 L555.3,332.6 L555.9,338.6 L556.4,334.2 L557.0,339.3 L557.5,334.7 L558.1,337.9 L558.6,334.5 L559.2,338.0 L559.7,334.3 L560.3,338.4 L560.8,333.6 L561.4,339.3 L561.9,334.1 L562.5,339.7 L563.0,333.3 L563.6,338.9 L564.1,332.1 L564.7,339.2 L565.2,333.7 L565.8,339.0 L566.3,332.5 L566.9,340.9 L567.4,332.0 L568.0,339.8 L568.5,333.3 L569.1,338.9 L569.6,332.4 L570.2,340.1 L570.7,333.2 L571.3,340.2 L571.8,333.1 L572.4,340.7 L572.9,332.7 L573.5,339.0 L574.0,332.6 L574.6,338.4 L575.1,333.6 L575.7,338.8 L576.2,334.4 L576.8,338.0 L577.3,333.9 L577.9,337.9 L578.4,334.0 L578.9,339.6 L579.5,334.4 L580.0,338.6 L580.6,333.3 L581.1,339.5 L581.7,333.0 L582.2,340.3 L582.8,333.8 L583.3,339.4 L583.9,333.4 L584.4,338.9 L585.0,331.9 L585.5,340.7 L586.1,332.2 L586.6,338.9 L587.2,331.9 L587.7,340.7 L588.3,332.9 L588.8,340.6 L589.4,333.0 L589.9,339.2 L590.5,333.9 L591.0,339.1 L591.6,334.2 L592.1,339.2 L592.7,332.9 L593.2,339.6 L593.8,333.1 L594.3,339.3 L594.9,334.4 L595.4,338.7 L596.0,334.4 L596.5,339.0 L597.1,334.0 L597.6,338.5 L598.2,333.5 L598.7,340.1 L599.3,334.0 L599.8,340.2 L600.4,334.3 L600.9,339.1 L601.5,333.6 L602.0,340.4 L602.6,331.9 L603.1,340.5 L603.7,333.2 L604.2,341.0 L604.8,333.2 L605.3,339.4 L605.9,331.7 L606.4,340.4 L607.0,332.3 L607.5,340.4 L608.1,331.7 L608.6,339.8 L609.2,332.2 L609.7,340.1 L610.3,332.4 L610.8,339.4 L611.4,333.0 L611.9,339.4 L612.5,334.0 L613.0,338.5 L613.6,333.8 L614.1,338.0 L614.7,333.8 L615.2,338.1 L615.8,334.8 L616.3,338.2 L616.9,333.0 L617.4,338.9 L618.0,334.2 L618.5,338.5 L619.1,334.2 L619.6,340.1 L620.2,332.7 L620.7,340.3 L621.3,332.3 L621.8,338.9 L622.4,332.6 L622.9,339.7 L623.5,332.0 L624.0,340.9 L624.6,331.8 L625.1,339.0 L625.7,331.9 L626.2,341.0 L626.8,331.8 L627.3,339.0 L627.9,333.7 L628.4,338.8 L629.0,334.2 L629.5,340.2 L630.1,332.8 L630.6,339.5 L631.2,333.1 L631.7,339.2 L632.3,334.3 L632.8,338.0 L633.4,334.9 L633.9,339.0 L634.5,334.5 L635.0,338.6 L635.6,333.9 L636.1,338.3 L636.7,333.9 L637.2,339.0 L637.8,332.8 L638.3,339.4 L638.9,333.4 L639.4,340.9 L640.0,332.9 L640.5,340.8 L641.1,332.5 L641.6,338.9 L642.2,332.9 L642.7,339.9 L643.3,332.1 L643.8,339.7 L644.4,332.3 L644.9,340.1 L645.5,333.5 L646.0,340.7 L646.6,333.9 L647.1,340.4 L647.7,333.9 L648.2,338.5 L648.8,334.0 L649.3,339.7 L649.9,332.8 L650.4,338.1 L651.0,334.0 L651.5,338.6 L652.1,333.9 L652.6,338.1 L653.2,334.0 L653.7,338.7 L654.3,333.1 L654.8,338.8 L655.4,332.6 L655.9,339.0 L656.5,333.8 L657.0,340.1 L657.6,333.0 L658.1,338.9 L658.7,332.6 L659.2,339.0 L659.8,332.1 L660.3,340.5 L660.9,332.0 L661.4,340.4 L662.0,333.1 L662.5,339.8 L663.1,333.0 L663.6,340.9 L664.2,333.8 L664.7,340.8 L665.3,334.1 L665.8,339.0 L666.4,333.7 L666.9,340.3 L667.5,333.4 L668.0,339.0 L668.6,333.0 L669.1,338.5 L669.7,334.1 L670.2,338.7 L670.8,334.0 L671.3,339.0 L671.9,333.8 L672.4,338.7 L673.0,334.0 L673.5,338.6 L674.1,332.8 L674.6,339.8 L675.2,332.7 L675.7,339.0 L676.3,333.2 L676.8,340.5 L677.4,332.7 L677.9,339.1 L678.5,332.9 L679.0,341.0 L679.6,333.4 L680.1,339.3 L680.7,333.2 L681.2,340.5 L681.8,331.9 L682.3,339.2 L682.9,333.7 L683.4,339.3 L684.0,333.4 L684.5,339.7 L685.1,333.9 L685.6,339.1 L686.2,334.1 L686.7,340.1 L687.3,333.3 L687.8,338.3 L688.4,333.3 L688.9,338.0 L689.5,334.5 L690.0,339.3 L690.6,333.6 L691.1,339.3 L691.7,333.8 L692.2,338.6 L692.8,333.2 L693.3,338.7 L693.9,333.8 L694.4,339.4 L695.0,334.1 L695.5,339.6 L696.1,332.2 L696.6,340.4 L697.2,332.8 L697.7,340.4 L698.3,332.8 L698.8,339.2 L699.4,332.5 L699.9,339.8 L700.5,332.2 L701.0,340.9 L701.6,333.0 L702.1,340.0 L702.7,332.5 L703.2,339.5 L703.8,333.8 L704.3,339.9 L704.9,332.7 L705.4,339.7 L706.0,333.4 L706.5,339.5 L707.1,333.7 L707.6,338.8 L708.2,334.4 L708.7,338.3 L709.3,333.8 L709.8,338.3 L710.4,333.9 L710.9,339.7 L711.5,333.0 L712.0,339.7 L712.6,333.8 L713.1,339.5 L713.7,333.1 L714.2,340.1 L714.8,333.1 L715.3,340.4 L715.9,331.7 L716.4,339.3 L717.0,332.4 L717.5,340.8 L718.1,333.0 L718.6,340.0 L719.2,331.6 L719.7,338.9 L720.3,332.8 L720.8,339.1 L721.4,332.4 L721.9,340.6 L722.5,333.2 L723.0,338.7 L723.6,333.3 L724.1,339.3 L724.7,333.3 L725.2,339.0 L725.8,333.8 L726.3,339.1 L726.9,334.3 L727.4,338.5 L728.0,333.3 L728.5,338.4 L729.1,333.4 L729.6,339.0 L730.2,332.9 L730.7,338.7 L731.3,332.2 L731.8,339.4 L732.4,334.0 L732.9,339.3 L733.5,333.1 L734.0,338.8 L734.6,333.0 L735.1,339.9 L735.7,332.2 L736.2,339.7 L736.8,333.3 L737.3,339.4 L737.9,332.2 L738.4,341.0 L739.0,332.8 L739.5,339.2 L740.1,332.4 L740.6,339.4 L741.2,333.8 L741.7,338.7 L742.3,332.9 L742.8,339.8 L743.4,333.5 L743.9,338.9 L744.5,333.9 L745.0,338.2 L745.6,333.7 L746.1,338.4 L746.7,333.8 L747.2,339.5 L747.8,333.1 L748.3,339.2 L748.9,333.8 L749.4,339.6 L750.0,334.0 L750.5,340.4 L751.1,333.4 L751.6,340.7 L752.2,333.4 L752.7,339.7 L753.3,333.4 L753.8,339.9 L754.4,333.5 L754.9,338.9 L755.5,332.2 L756.0,339.5 L756.6,333.4 L757.1,339.5 L757.7,332.9 L758.2,339.7 L758.8,332.7 L759.3,340.0 L759.9,333.5 L760.4,340.3 L761.0,332.8 L761.5,338.4 L762.1,333.1 L762.6,339.6 L763.2,333.6 L763.7,338.1 L764.3,333.9 L764.8,338.8 L765.4,334.8 L765.9,338.1 L766.5,332.9 L767.0,339.5 L767.6,333.9 L768.1,338.7 L768.7,334.0 L769.2,339.1 L769.8,332.4 L770.3,339.5 L770.9,333.7 L771.4,340.9 L772.0,332.1 L772.5,339.2 L773.1,331.8 L773.6,340.3 L774.2,332.0 L774.7,340.5 L775.3,331.8 L775.8,340.7 L776.4,332.1 L776.9,339.1 L777.5,332.6 L778.0,339.7 L778.6,332.7 L779.1,339.3 L779.7,332.7 L780.2,339.3 L780.8,334.1 L781.3,338.5 L781.9,334.6 L782.4,338.6 L783.0,335.0 L783.5,338.6 L784.1,334.6 L784.6,338.9 L785.2,333.7 L785.7,339.3 L786.3,332.7 L786.8,338.5 L787.4,332.5 L787.9,339.6 L788.5,332.9 L789.0,340.2 L789.6,332.1 L790.1,339.7 L790.7,333.0 L791.2,341.2 L791.8,333.8 L792.3,340.4 L792.9,332.4 L793.4,338.9 L794.0,332.5 L794.5,340.4 L795.1,331.9 L795.6,339.5 L796.2,332.0 L796.7,339.7 L797.3,333.3 L797.8,340.3 L798.4,334.4 L798.9,339.6 L799.5,333.5 L800.0,338.6 L800.6,333.5 L801.1,338.4 L801.7,334.4 L802.2,338.7 L802.8,333.6 L803.3,338.5 L803.9,333.8 L804.4,339.1 L805.0,333.3 L805.5,340.2 L806.1,333.6 L806.6,340.4 L807.2,333.2 L807.7,339.9 L808.3,333.4 L808.8,340.0 L809.4,331.6 L809.9,340.4 L810.5,332.0 L811.0,339.7 L811.6,333.2 L812.1,339.6 L812.7,332.6 L813.2,340.3 L813.8,332.2 L814.3,338.8 L814.9,332.5 L815.4,340.5 L816.0,333.1 L816.5,338.5 L817.1,333.9 L817.6,338.3 L818.2,334.3 L818.7,339.6 L819.3,333.9 L819.8,338.8 L820.4,333.9 L820.9,339.3 L821.5,333.8 L822.0,339.2 L822.6,333.5 L823.1,339.6 L823.7,333.2 L824.2,339.9 L824.8,333.8 L825.3,340.1 L825.9,333.1 L826.4,340.5 L827.0,333.8 L827.5,339.2 L828.1,333.9 L828.6,340.7 L829.2,331.7 L829.7,340.5 L830.3,333.1 L830.8,340.8 L831.4,332.1 L831.9,340.1 L832.5,333.5 L833.0,339.4 L833.6,333.2 L834.1,339.3 L834.7,333.4 L835.2,339.7 L835.8,332.6 L836.3,338.4 L836.9,333.6 L837.4,338.1 L838.0,334.6 L838.5,339.0 L839.1,334.2 L839.6,339.3 L840.2,334.1 L840.7,338.1 L841.3,333.9 L841.8,339.4 L842.4,332.6 L842.9,340.5 L843.5,333.2 L844.0,339.5 L844.6,333.9 L845.1,340.2 L845.7,333.5 L846.2,339.2 L846.8,333.9 L847.3,338.8 L847.9,332.3 L848.4,339.1 L849.0,331.6 L849.5,339.0 L850.1,331.9 L850.6,339.1 L851.2,334.0 L851.7,340.3 L852.3,333.6 L852.8,340.2 L853.4,333.9 L853.9,338.5 L854.5,332.9 L855.0,339.6 L855.6,333.1 L856.1,339.3 L856.7,334.7 L857.2,338.8 L857.8,334.0 L858.3,338.6 L858.9,333.3 L859.4,338.6 L860.0,332.8 L860.5,339.7 L861.1,334.4 L861.6,338.5 L862.2,332.9 L862.7,340.4 L863.3,334.0 L863.8,339.4 L864.4,332.3 L864.9,339.2 L865.5,331.9 L866.0,340.0 L866.6,333.8 L867.1,339.8 L867.7,332.6 L868.2,339.9 L868.8,332.4 L869.3,339.1 L869.9,332.2 L870.4,339.5 L871.0,332.7 L871.5,339.9 L872.1,333.4 L872.6,339.2 L873.2,332.9 L873.7,340.0 L874.3,333.3 L874.8,339.0 L875.4,334.4 L875.9,337.9 L876.5,333.7 L877.0,339.0 L877.6,333.4 L878.1,338.7 L878.7,333.5 L879.2,340.2 L879.8,332.8 L880.3,339.7 L880.9,333.6 L881.4,339.6 L882.0,332.1 L882.5,339.6 L883.1,332.4 L883.6,340.2 L884.2,331.8 L884.7,340.8 L885.3,333.3 L885.8,338.9 L886.4,333.3 L886.9,339.9 L887.5,332.6 L888.0,340.7 L888.6,332.0 L889.1,338.8 L889.7,332.3 L890.2,340.3 L890.8,332.5 L891.3,339.6 L891.9,333.9 L892.4,339.8 L893.0,333.2 L893.5,339.2 L894.1,333.4 L894.6,338.3 L895.2,334.9 L895.7,338.8 L896.3,333.5 L896.8,338.5 L897.4,333.2 L897.9,340.1 L898.5,333.9 L899.0,339.7 L899.6,332.8 L900.1,339.6 L900.7,333.7 L901.2,339.3 L901.8,332.3 L902.3,340.7 L902.9,332.9 L903.4,339.1 L904.0,332.0 L904.5,340.7 L905.1,333.4 L905.6,340.2 L906.2,331.8 L906.7,340.9 L907.3,332.9 L907.8,339.8 L908.4,332.9 L908.9,339.0 L909.5,333.9 L910.0,338.8 L910.6,333.1" fill="none" stroke="#e4de3a" stroke-width="0.9" stroke-linejoin="round"/>
    <path d="M2.0,408.5 L3.2,408.7 L4.4,408.5 L5.6,408.6 L6.8,408.2 L8.0,408.1 L9.2,409.1 L10.4,408.5 L11.6,408.2 L12.8,408.7 L14.0,408.9 L15.2,408.3 L16.4,408.7 L17.6,408.4 L18.8,408.6 L20.0,408.1 L21.2,408.1 L22.4,409.1 L23.6,409.0 L24.8,408.6 L26.0,408.7 L27.2,408.4 L28.4,408.9 L29.6,408.5 L30.8,409.0 L32.0,408.9 L33.2,408.9 L34.4,409.1 L35.6,408.4 L36.8,408.1 L38.0,408.3 L39.2,408.3 L40.4,408.2 L41.6,408.2 L42.8,408.7 L44.0,409.0 L45.2,408.6 L46.4,409.0 L47.6,409.0 L48.8,408.2 L50.0,408.7 L51.2,408.5 L52.4,408.2 L53.6,409.1 L54.8,408.4 L56.0,408.7 L57.2,408.7 L58.4,409.1 L59.6,408.8 L60.8,408.5 L62.0,408.5 L63.2,408.3 L64.4,409.1 L65.6,409.1 L66.8,408.3 L68.0,408.1 L69.2,408.4 L70.4,408.5 L71.6,409.0 L72.8,409.0 L74.0,408.9 L75.2,408.1 L76.4,408.9 L77.6,408.8 L78.8,408.7 L80.0,409.1 L81.2,408.2 L82.4,408.2 L83.6,408.9 L84.8,409.0 L86.0,408.8 L87.2,408.4 L88.4,408.7 L89.6,408.9 L90.8,408.2 L92.0,408.4 L93.2,408.4 L94.4,408.2 L95.6,408.6 L96.8,408.3 L98.0,408.3 L99.2,408.2 L100.4,408.8 L101.6,408.1 L102.8,408.8 L104.0,408.3 L105.2,408.1 L106.4,409.0 L107.6,408.3 L108.8,409.0 L110.0,409.0 L111.2,409.0 L112.4,408.2 L113.6,408.5 L114.8,408.2 L116.0,409.0 L117.2,408.9 L118.4,408.7 L119.6,408.6 L120.8,408.4 L122.0,408.9 L123.2,408.6 L124.4,408.7 L125.6,408.2 L126.8,408.3 L128.0,408.2 L129.2,408.8 L130.4,408.7 L131.6,408.2 L132.8,409.0 L134.0,408.4 L135.2,408.5 L136.4,408.3 L137.6,408.4 L138.8,408.9 L140.0,408.4 L141.2,408.3 L142.4,408.6 L143.6,408.4 L144.8,409.0 L146.0,408.2 L147.2,409.1 L148.4,408.2 L149.6,409.0 L150.8,408.8 L152.0,408.3 L153.2,408.6 L154.4,408.4 L155.6,408.4 L156.8,408.3 L158.0,408.5 L159.2,409.1 L160.4,409.1 L161.6,409.0 L162.8,408.2 L164.0,408.4 L165.2,409.0 L166.4,408.2 L167.6,408.8 L168.8,408.4 L170.0,409.1 L171.2,408.1 L172.4,408.9 L173.6,408.4 L174.8,408.2 L176.0,408.1 L177.2,408.9 L178.4,408.6 L179.6,408.3 L180.8,408.5 L182.0,409.0 L183.2,408.3 L184.4,408.7 L185.6,408.2 L186.8,408.3 L188.0,408.9 L189.2,408.8 L190.4,408.3 L191.6,408.2 L192.8,408.2 L194.0,408.7 L195.2,408.6 L196.4,408.4 L197.6,408.3 L198.8,408.7 L200.0,408.8 L201.2,408.9 L202.4,408.7 L203.6,408.3 L204.8,408.2 L206.0,408.8 L207.2,408.5 L208.4,408.8 L209.6,408.2 L210.8,408.9 L212.0,408.4 L213.2,408.9 L214.4,409.0 L215.6,408.6 L216.8,408.1 L218.0,409.0 L219.2,408.6 L220.4,409.0 L221.6,408.4 L222.8,408.3 L224.0,408.9 L225.2,408.5 L226.4,408.3 L227.6,408.5 L228.8,408.7 L230.0,408.1 L231.2,408.6 L232.4,408.5 L233.6,408.6 L234.8,408.2 L236.0,408.8 L237.2,408.9 L238.4,409.0 L239.6,408.4 L240.8,408.8 L242.0,408.5 L243.2,408.9 L244.4,408.2 L245.6,409.0 L246.8,409.1 L248.0,408.6 L249.2,408.6 L250.4,408.6 L251.6,408.6 L252.8,408.1 L254.0,409.1 L255.2,408.3 L256.4,408.3 L257.6,408.2 L258.8,408.4 L260.0,408.9 L261.2,408.1 L262.4,408.2 L263.6,408.8 L264.8,408.3 L266.0,408.1 L267.2,408.7 L268.4,408.7 L269.6,408.6 L270.8,408.8 L272.0,408.2 L273.2,409.0 L274.4,408.8 L275.6,408.1 L276.8,408.2 L278.0,408.6 L279.2,408.6 L280.4,408.4 L281.6,408.2 L282.8,408.5 L284.0,408.2 L285.2,408.7 L286.4,409.0 L287.6,408.2 L288.8,408.7 L290.0,408.8 L291.2,408.3 L292.4,408.9 L293.6,409.0 L294.8,408.5 L296.0,408.5 L297.2,408.9 L298.4,408.6 L299.6,408.5 L300.8,409.0 L302.0,408.9 L303.2,408.4 L304.4,408.3 L305.6,408.4 L306.8,408.5 L308.0,409.1 L309.2,408.9 L310.4,409.0 L311.6,408.9 L312.8,408.9 L314.0,408.2 L315.2,408.6 L316.4,409.1 L317.6,409.0 L318.8,408.3 L320.0,408.5 L321.2,408.7 L322.4,408.5 L323.6,408.6 L324.8,408.2 L326.0,408.5 L327.2,408.6 L328.4,408.1 L329.6,408.2 L330.8,409.1 L332.0,408.9 L333.2,409.0 L334.4,408.7 L335.6,408.9 L336.8,409.0 L338.0,409.0 L339.2,408.1 L340.4,408.7 L341.6,408.4 L342.8,408.8 L344.0,408.4 L345.2,408.6 L346.4,409.0 L347.6,408.7 L348.8,408.4 L350.0,408.6 L351.2,408.5 L352.4,409.1 L353.6,408.4 L354.8,408.4 L356.0,408.7 L357.2,408.2 L358.4,408.7 L359.6,409.1 L360.8,408.6 L362.0,408.4 L363.2,408.6 L364.4,408.6 L365.6,408.2 L366.8,408.2 L368.0,408.2 L369.2,408.4 L370.4,408.5 L371.6,408.4 L372.8,408.3 L374.0,408.2 L375.2,408.6 L376.4,408.9 L377.6,408.7 L378.8,408.7 L380.0,408.8 L381.2,408.3 L382.4,408.8 L383.6,408.6 L384.8,408.6 L386.0,408.7 L387.2,408.6 L388.4,408.4 L389.6,408.3 L390.8,408.3 L392.0,408.6 L393.2,408.5 L394.4,408.7 L395.6,408.1 L396.8,408.5 L398.0,409.0 L399.2,408.3 L400.4,408.7 L401.6,408.6 L402.8,408.4 L404.0,409.1 L405.2,408.4 L406.4,408.9 L407.6,408.3 L408.8,408.2 L410.0,409.0 L411.2,408.5 L412.4,408.2 L413.6,408.5 L414.8,408.5 L416.0,408.8 L417.2,408.2 L418.4,408.3 L419.6,409.1 L420.8,408.8 L422.0,408.3 L423.2,408.4 L424.4,408.5 L425.6,408.8 L426.8,408.7 L428.0,408.9 L429.2,408.9 L430.4,408.6 L431.6,408.8 L432.8,408.8 L434.0,408.9 L435.2,408.6 L436.4,408.9 L437.6,408.8 L438.8,409.0 L440.0,408.2 L441.2,409.0 L442.4,408.1 L443.6,408.9 L444.8,408.7 L446.0,408.6 L447.2,409.1 L448.4,408.7 L449.6,408.5 L450.8,408.9 L452.0,409.0 L453.2,408.7 L454.4,408.5 L455.6,408.6 L456.8,408.6 L458.0,408.8 L459.2,408.4 L460.4,408.5 L461.6,408.7 L462.8,408.5 L464.0,408.4 L465.2,408.9 L466.4,408.9 L467.6,408.6 L468.8,408.5 L470.0,408.3 L471.2,408.4 L472.4,408.2 L473.6,408.7 L474.8,408.7 L476.0,408.2 L477.2,409.0 L478.4,408.4 L479.6,408.9 L480.8,408.9 L482.0,409.1 L483.2,408.3 L484.4,408.5 L485.6,409.0 L486.8,408.1 L488.0,408.1 L489.2,408.7 L490.4,408.6 L491.6,409.0 L492.8,408.9 L494.0,408.6 L495.2,409.1 L496.4,408.6 L497.6,408.6 L498.8,408.8 L500.0,406.8 L501.2,402.8 L502.4,399.1 L503.6,395.6 L504.8,393.0 L506.0,389.6 L507.2,386.1 L508.4,382.2 L509.6,379.5 L510.8,377.1 L512.0,374.9 L513.2,373.1 L514.4,371.6 L515.6,369.9 L516.8,367.7 L518.0,366.2 L519.2,364.8 L520.4,363.7 L521.6,361.5 L522.8,360.1 L524.0,359.0 L525.2,356.9 L526.4,355.6 L527.6,354.8 L528.8,353.2 L530.0,351.5 L531.2,349.7 L532.4,349.0 L533.6,347.4 L534.8,346.0 L536.0,344.8 L537.2,343.2 L538.4,341.3 L539.6,339.6 L540.8,338.5 L542.0,337.4 L543.2,336.4 L544.4,336.1 L545.6,336.1 L546.8,336.5 L548.0,336.5 L549.2,336.3 L550.4,336.9 L551.6,336.5 L552.8,335.9 L554.0,336.3 L555.2,336.7 L556.4,336.2 L557.6,336.6 L558.8,335.9 L560.0,336.2 L561.2,336.7 L562.4,336.5 L563.6,336.6 L564.8,336.1 L566.0,336.4 L567.2,336.5 L568.4,336.2 L569.6,336.5 L570.8,336.4 L572.0,336.9 L573.2,336.5 L574.4,336.3 L575.6,336.0 L576.8,336.1 L578.0,336.7 L579.2,336.0 L580.4,336.0 L581.6,336.1 L582.8,336.4 L584.0,336.7 L585.2,336.5 L586.4,336.7 L587.6,336.0 L588.8,335.9 L590.0,336.7 L591.2,336.2 L592.4,336.6 L593.6,336.3 L594.8,336.1 L596.0,336.2 L597.2,336.0 L598.4,336.8 L599.6,336.5 L600.8,336.2 L602.0,336.3 L603.2,336.3 L604.4,336.0 L605.6,336.8 L606.8,336.5 L608.0,336.9 L609.2,336.3 L610.4,336.5 L611.6,336.1 L612.8,335.9 L614.0,336.8 L615.2,336.8 L616.4,336.2 L617.6,336.8 L618.8,336.7 L620.0,336.2 L621.2,336.5 L622.4,336.9 L623.6,336.4 L624.8,336.8 L626.0,336.1 L627.2,336.3 L628.4,336.6 L629.6,336.1 L630.8,336.2 L632.0,336.8 L633.2,336.4 L634.4,336.7 L635.6,336.1 L636.8,336.1 L638.0,336.3 L639.2,336.1 L640.4,336.9 L641.6,336.2 L642.8,336.5 L644.0,336.0 L645.2,336.4 L646.4,336.3 L647.6,336.3 L648.8,336.0 L650.0,336.0 L651.2,336.7 L652.4,336.3 L653.6,336.1 L654.8,336.1 L656.0,336.2 L657.2,336.1 L658.4,335.9 L659.6,336.6 L660.8,336.2 L662.0,336.1 L663.2,336.6 L664.4,336.0 L665.6,336.2 L666.8,336.7 L668.0,336.0 L669.2,336.3 L670.4,336.7 L671.6,336.7 L672.8,336.1 L674.0,336.3 L675.2,336.6 L676.4,336.3 L677.6,336.9 L678.8,336.1 L680.0,336.9 L681.2,336.4 L682.4,336.1 L683.6,336.4 L684.8,336.0 L686.0,336.6 L687.2,336.2 L688.4,336.8 L689.6,336.5 L690.8,336.3 L692.0,336.1 L693.2,336.5 L694.4,336.1 L695.6,336.8 L696.8,336.0 L698.0,336.4 L699.2,336.4 L700.4,336.2 L701.6,336.7 L702.8,336.3 L704.0,336.6 L705.2,336.5 L706.4,336.2 L707.6,336.3 L708.8,336.0 L710.0,336.1 L711.2,336.8 L712.4,336.2 L713.6,336.6 L714.8,336.0 L716.0,336.5 L717.2,336.3 L718.4,336.4 L719.6,336.2 L720.8,336.0 L722.0,336.2 L723.2,336.1 L724.4,336.0 L725.6,336.6 L726.8,336.2 L728.0,336.3 L729.2,336.8 L730.4,336.7 L731.6,336.8 L732.8,336.8 L734.0,336.0 L735.2,336.2 L736.4,335.9 L737.6,336.6 L738.8,336.6 L740.0,336.3 L741.2,336.3 L742.4,336.6 L743.6,336.6 L744.8,336.1 L746.0,336.7 L747.2,336.3 L748.4,336.5 L749.6,336.1 L750.8,336.0 L752.0,336.8 L753.2,336.6 L754.4,336.6 L755.6,335.9 L756.8,335.9 L758.0,336.1 L759.2,336.1 L760.4,336.2 L761.6,336.3 L762.8,335.9 L764.0,336.2 L765.2,336.5 L766.4,336.1 L767.6,336.7 L768.8,336.5 L770.0,336.6 L771.2,336.2 L772.4,336.3 L773.6,336.6 L774.8,336.2 L776.0,335.9 L777.2,336.7 L778.4,336.7 L779.6,336.2 L780.8,335.9 L782.0,336.8 L783.2,336.5 L784.4,335.9 L785.6,336.1 L786.8,336.0 L788.0,336.7 L789.2,336.1 L790.4,336.8 L791.6,336.6 L792.8,336.0 L794.0,336.6 L795.2,336.3 L796.4,336.6 L797.6,336.7 L798.8,336.2 L800.0,336.0 L801.2,336.8 L802.4,336.3 L803.6,336.8 L804.8,336.6 L806.0,336.6 L807.2,336.7 L808.4,336.5 L809.6,336.4 L810.8,336.0 L812.0,336.6 L813.2,336.3 L814.4,336.4 L815.6,336.8 L816.8,336.0 L818.0,336.7 L819.2,335.9 L820.4,336.6 L821.6,336.7 L822.8,336.2 L824.0,336.4 L825.2,336.9 L826.4,336.5 L827.6,336.4 L828.8,336.1 L830.0,336.0 L831.2,336.3 L832.4,336.3 L833.6,336.1 L834.8,336.2 L836.0,336.0 L837.2,336.6 L838.4,336.6 L839.6,336.1 L840.8,336.1 L842.0,336.4 L843.2,336.3 L844.4,336.8 L845.6,336.3 L846.8,336.2 L848.0,336.8 L849.2,336.0 L850.4,336.5 L851.6,336.2 L852.8,336.7 L854.0,336.4 L855.2,336.7 L856.4,336.1 L857.6,336.6 L858.8,336.5 L860.0,336.4 L861.2,336.7 L862.4,336.7 L863.6,336.0 L864.8,336.2 L866.0,336.3 L867.2,336.1 L868.4,336.0 L869.6,336.2 L870.8,336.1 L872.0,336.6 L873.2,336.3 L874.4,336.0 L875.6,336.2 L876.8,336.4 L878.0,336.3 L879.2,336.1 L880.4,336.0 L881.6,335.9 L882.8,336.9 L884.0,336.7 L885.2,336.0 L886.4,336.6 L887.6,336.9 L888.8,336.5 L890.0,336.0 L891.2,336.4 L892.4,336.3 L893.6,336.1 L894.8,336.4 L896.0,335.9 L897.2,336.8 L898.4,336.5 L899.6,336.5 L900.8,336.8 L902.0,336.6 L903.2,336.2 L904.4,336.1 L905.6,336.0 L906.8,335.9 L908.0,336.7 L909.2,336.7 L910.4,336.2" fill="none" stroke="#e8e214" stroke-width="2.3"/>
    <!-- trigger marker -->
    <path d="M515 29.6 H524.6 L519.8 34.2 Z" fill="#f09040"/>
    <rect x="515.2" y="35.4" width="9.4" height="9.4" fill="#140a04" stroke="#e4a878" stroke-width="1.3"/>
    <path d="M517.6 38.4 H522.2 M519.9 38.4 V43" stroke="#dcc4a8" stroke-width="1.4" fill="none"/>
    <path d="M518 45.6 H522 L520 48.5 Z" fill="#f09040"/>
    <!-- corner triangle -->
    <path d="M889.5 33 H907.3 V50.3 Z" fill="#5e5e5e" stroke="#5e5e5e" stroke-width="0.6" stroke-linejoin="round"/>
    <circle cx="904" cy="36.6" r="2" fill="#1a1a1a" stroke="#cfcfcf" stroke-width="1.2"/>
    <line x1="902.5" y1="38.3" x2="898.5" y2="41.4" stroke="#cfcfcf" stroke-width="1.5"/>
    <!-- C1 marker -->
    <path d="M2 401.5 H17 L21.3 407.3 L17 413 H2 Z" fill="#ece428" stroke="#ece428" stroke-width="0.8" stroke-linejoin="round"/>
    <!-- level marker right -->
    <path d="M900 365 L906.3 360.3 V369.8 Z" fill="#ece428"/>
    <rect x="906" y="364" width="5" height="2" fill="#ece428"/>
  </svg>
  <div class="a" style="left:4.3px;top:371.5px;font-size:9.5px;line-height:11px;color:#141400;letter-spacing:1px">C1</div>
  <div class="a" style="left:4px;top:345px;font-size:12.2px;color:#e8e050;line-height:14px;letter-spacing:-0.75px">PD_FPGA_RREF_SDM</div>
  <div class="a" style="left:0;top:0;width:909px;height:471px"><div class="vl" style="top:43.2px">2.1 V</div><div class="vl" style="top:90.2px">1.8 V</div><div class="vl" style="top:137.2px">1.5 V</div><div class="vl" style="top:184.2px">1.2 V</div><div class="vl" style="top:231.2px">900 mV</div><div class="vl" style="top:278.2px">600 mV</div><div class="vl" style="top:325.2px">300 mV</div><div class="vl" style="top:372.2px">0 V</div><div class="vl" style="top:419.2px">-300 mV</div><div class="tl" style="left:43px">-5 ms</div><div class="tl" style="left:134px">-4 ms</div><div class="tl" style="left:225px">-3 ms</div><div class="tl" style="left:316px">-2 ms</div><div class="tl" style="left:407px">-1 ms</div><div class="tl" style="left:498px">0 s</div><div class="tl" style="left:589px">1 ms</div><div class="tl" style="left:680px">2 ms</div><div class="tl" style="left:771px">3 ms</div><div class="tl" style="left:862px">4 ms</div></div>
</div>

<!-- dots -->
<div class="a" style="left:916px;top:252px;width:2px;height:2px;background:#ddd"></div>
<div class="a" style="left:916px;top:257.5px;width:2px;height:2px;background:#ddd"></div>
<div class="a" style="left:916px;top:262.5px;width:2px;height:2px;background:#ddd"></div>

<div id="panel"></div>
<div class="a" style="left:920px;top:16.3px;width:79px;text-align:center;font-size:8.5px;font-weight:bold;color:#e6e6e6;line-height:10px">Add New...</div>
<div class="btn" style="left:924px;top:31px">Cursors</div>
<div class="btn" style="left:962px;top:31px">Note</div>
<div class="btn" style="left:924px;top:55px;letter-spacing:-0.3px">Measure</div>
<div class="btn" style="left:962px;top:55px">Search</div>
<div class="btn" style="left:924px;top:78.5px;line-height:8.5px;padding-top:1px">Results<br>Table</div>
<div class="btn" style="left:962px;top:78.5px">Plot</div>
<div class="a" style="left:921px;top:101px;width:78px;height:1px;background:#444"></div>

<div class="card" style="top:109.5px;height:32px"><div class="h">Meas 3<div class="bd"></div></div><div class="b">Maximum<br>µ': 492.2 mV</div></div>
<div class="card" style="top:144px;height:32.5px"><div class="h">Meas 4<div class="bd"></div></div><div class="b">Minimum<br>µ': -51.97 mV</div></div>
<div class="card" style="top:179px;height:42.5px"><div class="h" style="background:#0c0c0c;color:#e4e0a0">Meas 8<div class="bd"></div></div><div class="b"><span style="color:#454545">Fall Time</span><br>µ': --<br><b style="color:#111">Low amplitude</b></div></div>
<div class="card" style="top:224px;height:42px"><div class="h">Meas 9<div class="bd"></div></div><div class="b"><span style="color:#454545">Rise Time</span><br>µ': 394.3 µs<br><b style="color:#111">Low amplitude</b></div></div>

<div class="a" style="left:921px;top:474.5px;width:78px;height:1px;background:#444"></div>
<div class="a" style="left:997px;top:16px;width:1px;height:486px;background:#3a3a3a"></div>
<div class="a" style="left:924px;top:480.2px;width:32.7px;height:19px;border:1px solid #4c4c4c;border-top-color:#5a5a5a;border-radius:3.5px;background:#282828"></div>
<svg class="a" style="left:924px;top:480px" width="75" height="22">
  <path d="M10.3 3 V12.5 M10.3 3.4 H18 M17.6 3.4 V8" stroke="#9a9a9a" stroke-width="0.9" fill="none" stroke-dasharray="1.3,1.1"/>
  <circle cx="16.9" cy="10.4" r="2.7" fill="none" stroke="#d4d4d4" stroke-width="1.1"/>
  <line x1="18.9" y1="12.5" x2="22.5" y2="15.6" stroke="#d4d4d4" stroke-width="1.6"/>
  <path d="M49.2 5.2 Q48.8 1.6 51 1.6 H60 Q62.2 1.6 61.8 5.2 Z" fill="none" stroke="#cfcfcf" stroke-width="1"/>
  <path d="M50.3 5.3 L51.3 17 Q51.5 18.2 52.6 18.2 H58.6 Q59.7 18.2 59.9 17 L60.9 5.3" stroke="#cfcfcf" stroke-width="1" fill="none"/>
  <path d="M52.6 6.8 V16.3 M55.6 6.8 V16.3 M58.5 6.8 V16.3" stroke="#bdbdbd" stroke-width="0.9" fill="none"/>
</svg>

<!-- bottom bar -->
<div class="bc" style="left:2px;width:46px;top:505px;height:41px"><div class="h" style="background:#f0e430;color:#1a1a1a;height:10.5px;line-height:11px;font-size:8.4px;letter-spacing:-0.3px">Ch 1</div>
  <div class="r" style="left:3px;top:12px">300 mV/div</div>
  <div class="r" style="left:3px;top:21.5px">1 MΩ</div>
  <div class="r" style="left:3px;top:31px">20 MHz</div>
  <svg class="a" style="left:39px;top:33px" width="7" height="6"><path d="M0.5 0.5 V4 H6 M2 2 H5 V5" stroke="#222" stroke-width="1.2" fill="none"/></svg>
</div>

<div class="chb" style="left:509.5px"><div class="bar" style="background:#3cb0a6"></div><div class="a" style="left:0;width:100%;top:15.8px;font-size:11.6px;line-height:14px">2</div></div>
<div class="chb" style="left:533px"><div class="bar" style="background:#cc4a64"></div><div class="a" style="left:0;width:100%;top:15.8px;font-size:11.6px;line-height:14px">3</div></div>
<div class="chb" style="left:556.5px"><div class="bar" style="background:#94b440"></div><div class="a" style="left:0;width:100%;top:15.8px;font-size:11.6px;line-height:14px">4</div></div>
<div class="a" style="left:582px;top:504px;width:1px;height:41px;background:#444"></div>
<div class="chb" style="left:588.5px"><div class="bar" style="background:#d08040"></div><div class="a" style="left:0;width:100%;top:9.3px;font-size:8.5px;line-height:8.6px;letter-spacing:-0.25px">Add<br>New<br>Math</div></div>
<div class="chb" style="left:611.5px"><div class="bar" style="background:#acacac"></div><div class="a" style="left:0;width:100%;top:9.3px;font-size:8.5px;line-height:8.6px;letter-spacing:-0.25px">Add<br>New<br>Ref</div></div>
<div class="chb" style="left:635px"><div class="bar" style="background:#8c58c0"></div><div class="a" style="left:0;width:100%;top:9.3px;font-size:8.5px;line-height:8.6px;letter-spacing:-0.25px">Add<br>New<br>Bus</div></div>
<div class="a" style="left:660px;top:504px;width:1px;height:41px;background:#444"></div>

<div class="bc" style="left:666.5px;width:104px"><div class="h">Horizontal</div>
  <div class="r" style="left:3px;top:12px">1 ms/div</div>
  <div class="r" style="left:3px;top:21.5px">SR: 125 MS/s</div>
  <div class="r" style="left:3px;top:31px">RL: 1.25 Mpts</div>
  <div class="r" style="left:59px;top:12px">10 ms</div>
  <div class="r" style="left:59px;top:21.5px">8 ns/pt</div>
  <div class="a" style="left:59px;top:33px;width:6px;height:6px;background:#4a2a10;border:1px solid #d89060"></div>
  <div class="r" style="left:68px;top:31px">57%</div>
</div>
<div class="bc" style="left:776px;width:83px"><div class="h">Trigger</div>
  <div class="a" style="left:3.5px;top:12.5px;width:15px;height:9px;border:1px solid #6a6a10;border-radius:3px;background:#f0ee40"><div class="a" style="left:6px;top:1.5px;width:1.3px;height:4.5px;background:#3a3a00"></div></div>
  <svg class="a" style="left:24px;top:12.5px" width="10" height="10"><path d="M1 1 Q5 3 5 5 Q5 7 9 9 M9 1 Q5 3 5 5 Q5 7 1 9" stroke="#505060" stroke-width="0.9" fill="none"/></svg>
  <div class="r" style="left:37px;top:12px">264 mV</div>
</div>
<div class="bc" style="left:864px;width:78px"><div class="h">Acquisition</div>
  <div class="r" style="left:3px;top:12px">Auto,</div>
  <div class="r" style="left:45px;top:12px">Analyze</div>
  <div class="r" style="left:3px;top:21.5px">Sample: 12 bits</div>
  <div class="r" style="left:3px;top:31px">Single: 1 /1</div>
</div>
<div class="a" style="left:947.5px;top:504px;width:46.5px;height:19px;border-radius:3px;background:#ee1f29;color:#fff;font-size:7.4px;font-weight:bold;text-align:center;line-height:18.5px;letter-spacing:-0.1px">Stopped</div>
<div class="a" style="left:947.5px;top:527.5px;width:46.5px;height:18px;border-radius:2px;background:#c9c9c9;color:#303030;font-size:8.3px;text-align:center;line-height:8.5px;padding-top:0.5px;letter-spacing:-0.35px">31 Mar 2020<br>7:52:53 PM</div>

</body></html>
